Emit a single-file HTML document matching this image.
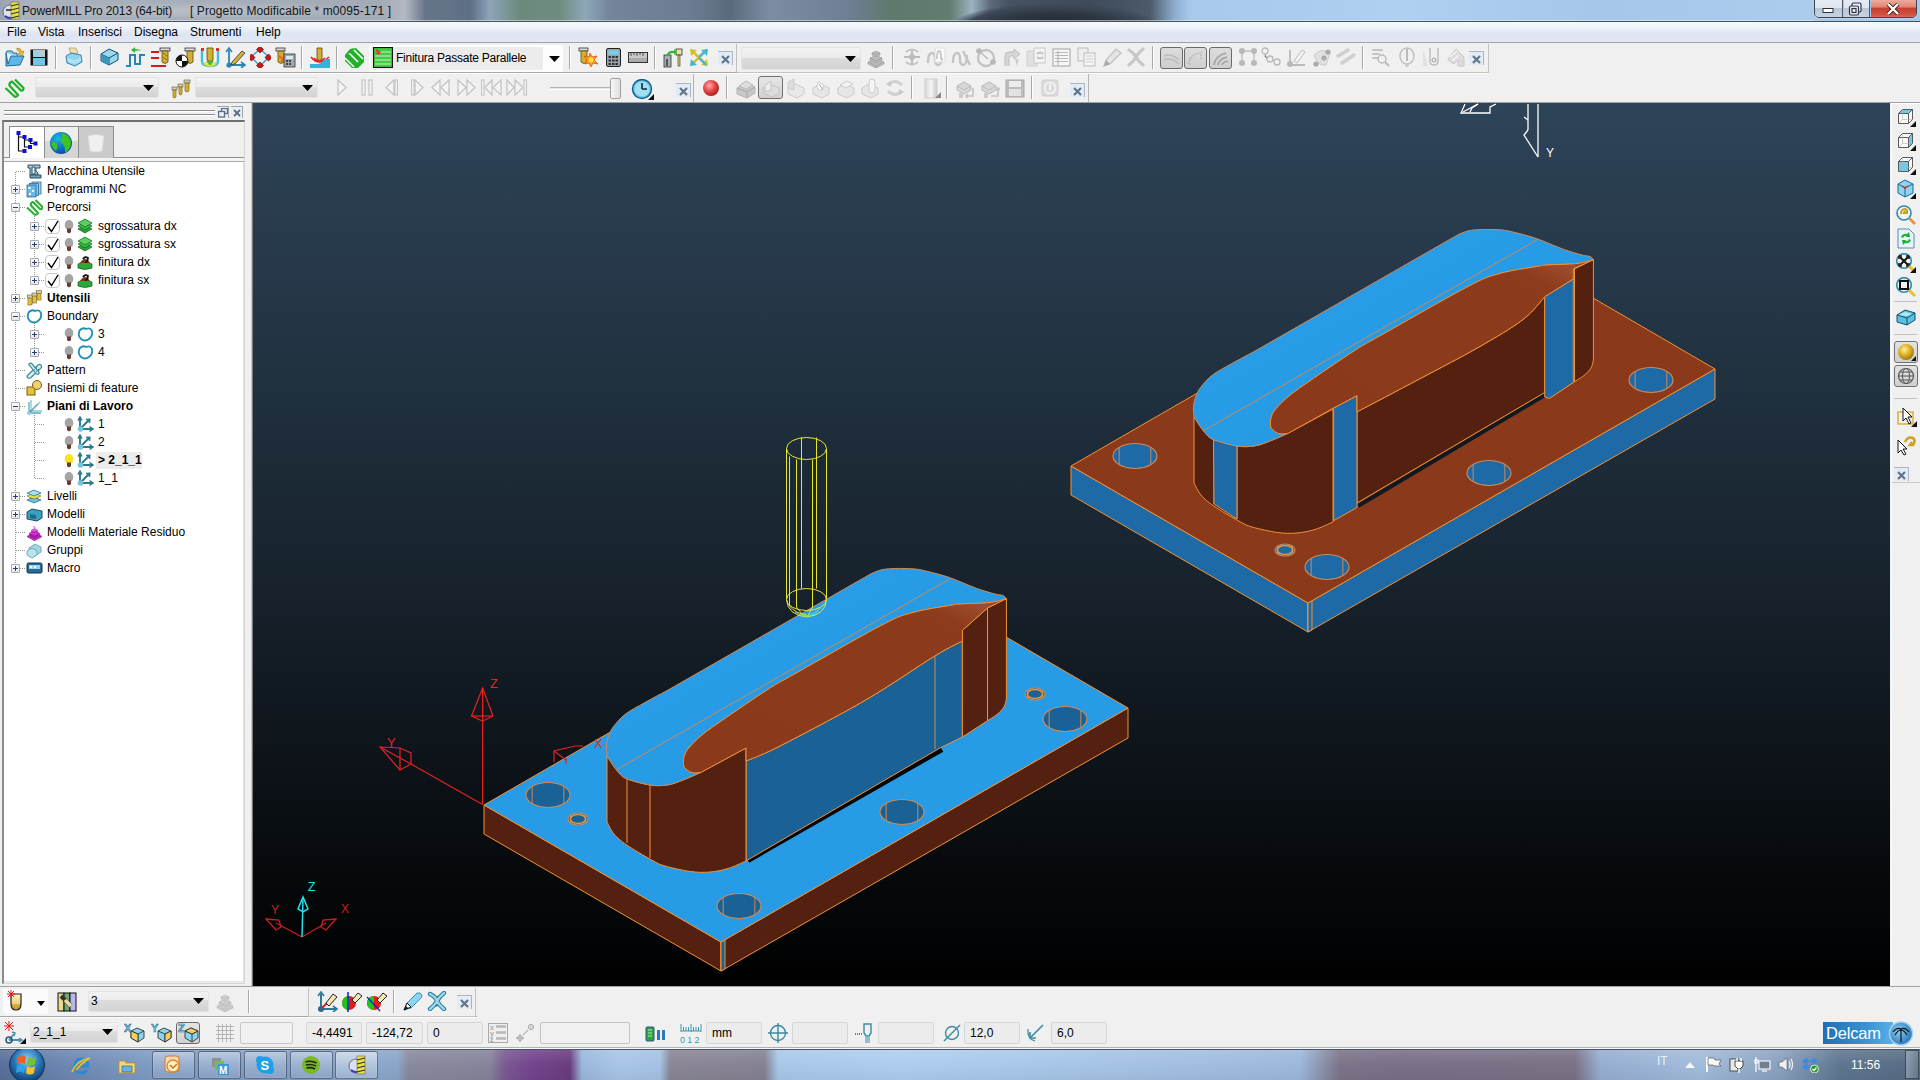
<!DOCTYPE html>
<html><head><meta charset="utf-8">
<style>
*{box-sizing:border-box;margin:0;padding:0}
html,body{width:1920px;height:1080px;overflow:hidden;background:#f0f0f0;font-family:"Liberation Sans",sans-serif;font-size:12px;color:#000}
.a{position:absolute}
#title{left:0;top:0;width:1920px;height:21px;background:linear-gradient(90deg,#7d8796 0%,#8a95a6 20%,#7f8ca0 35%,#6d7a8c 40%,#5a6878 48%,#4f5f70 55%,#44525f 58%,#7e98b4 62%,#a9c8e8 66%,#b2d2f2 75%,#a8c8ea 85%,#b0cff0 95%,#a8c6e6 100%)}
#title .t{left:22px;top:3px;font-size:12px;color:#111;white-space:pre}
#menu{left:0;top:22px;width:1920px;height:20px;background:linear-gradient(#f6f8fc 0,#eef2f9 30%,#dde5f2 60%,#e2e8f4 100%)}
#menu span{position:absolute;top:2px;line-height:16px}
#tb1{left:0;top:42px;width:1920px;height:31px;background:#f0f0f0;border-top:1px solid #a0a0a0}
#tb2{left:0;top:73px;width:1920px;height:30px;background:#f0f0f0;border-top:1px solid #c8c8c8}
#panel{left:0;top:103px;width:253px;height:883px;background:#f0f0f0}
#vp{left:253px;top:103px;width:1637px;height:883px;background:linear-gradient(#2e4459,#17222c 55%,#000 100%);overflow:hidden}
#rtb{left:1890px;top:103px;width:30px;height:883px;background:#f0f0f0}
#btb1{left:0;top:986px;width:1920px;height:31px;background:#f0f0f0;border-top:1px solid #a8a8a8}
#btb2{left:0;top:1017px;width:1920px;height:31px;background:#f0f0f0;border-top:1px solid #d0d0d0}
#task{left:0;top:1048px;width:1920px;height:32px;background:linear-gradient(90deg,#5d7494 0%,#7d93b3 10%,#8aa0bd 20%,#7a90b0 25%,#6a5480 27%,#5d4a78 29%,#8aa6c8 33%,#a5c2e2 45%,#a9c6e5 60%,#9db9db 68%,#776f82 72%,#7b7486 80%,#8faccd 84%,#a5c3e3 90%,#6f8aa8 98%,#5f7690 100%);border-top:1px solid #3c4a5a}
</style></head><body>
<div class="a" style="left:0;top:0;width:1920px;height:21px;background:linear-gradient(90deg,#9aa3b0 0.00%,#a9b1bc 1.04%,#a6aeb9 10.42%,#a2aab6 19.79%,#b4b9c4 21.09%,#66768a 22.14%,#5e6e84 24.48%,#8ea4b8 25.52%,#6c8a7c 27.08%,#6f8c80 29.17%,#8ea8b8 30.47%,#74849a 31.77%,#6c7c92 35.94%,#5a6a7e 38.02%,#7c8ca2 40.10%,#6e7e94 44.27%,#5e7a6c 46.35%,#627c70 49.48%,#9cb2c2 50.62%,#5c6b7c 51.56%,#46525f 52.60%,#3e4a58 56.77%,#4c5a6a 59.90%,#8eaed0 61.20%,#a8c8ec 61.98%,#b0d0f2 72.92%,#a6c6ea 83.33%,#acccee 93.75%,#a8c8ea 100.00%)"></div>
<div class="a" style="left:930px;top:0;width:240px;height:21px;overflow:hidden"><div style="position:absolute;left:20px;top:3px;width:210px;height:50px;border-radius:50%;background:radial-gradient(ellipse at 50% 50%,#1e2630 0%,#2c3540 40%,#3c4756 60%,rgba(70,82,98,0) 72%)"></div></div>
<div class="a" style="left:14px;top:2px;width:390px;height:17px;background:radial-gradient(ellipse at 50% 50%,rgba(200,206,214,0.6),rgba(200,206,214,0) 70%)"></div>
<div class="a" style="left:0;top:21px;width:1920px;height:1px;background:#4a5058"></div>
<div class="a" style="left:0;top:20px;width:1814px;height:1px;background:rgba(235,242,250,0.55)"></div>
<div class="a" style="left:22px;top:3px;line-height:17px;font-size:12px;color:#151515;white-space:pre;letter-spacing:-0.13px">PowerMILL Pro 2013 (64-bit)</div>
<div class="a" style="left:190px;top:3px;line-height:17px;font-size:12px;color:#151515;white-space:pre;letter-spacing:0.1px">[ Progetto Modificabile * m0095-171 ]</div>
<svg class="a" style="left:2px;top:1px" width="18" height="19" viewBox="0 0 18 19"><circle cx="8" cy="11" r="7" fill="#dde2ea" stroke="#556" stroke-width="0.8"/><path d="M3,15 Q8,19 13,15" stroke="#3040c0" stroke-width="2" fill="none"/><rect x="9" y="1" width="8" height="17" fill="#e8e040" stroke="#666" stroke-width="0.6"/><path d="M9,5 L17,3 M9,9 L17,7 M9,13 L17,11 M9,17 L17,15" stroke="#333" stroke-width="1.2"/><path d="M4,9 L9,9" stroke="#222" stroke-width="1.5"/></svg>
<div class="a" style="left:1814px;top:-2px;width:103px;height:20px;border:1px solid #3c4450;border-radius:0 0 5px 5px;overflow:hidden;box-shadow:0 0 1px #fff"><div style="position:absolute;left:0;top:0;width:28px;height:19px;background:linear-gradient(#e6ecf4 0,#dfe6ef 45%,#b9c7d8 50%,#c8d4e2 100%);border-right:1px solid #50586a"></div><div style="position:absolute;left:29px;top:0;width:26px;height:19px;background:linear-gradient(#e6ecf4 0,#dfe6ef 45%,#b9c7d8 50%,#c8d4e2 100%);border-right:1px solid #50586a"></div><div style="position:absolute;left:56px;top:0;width:47px;height:19px;background:linear-gradient(#f0b0a0 0,#e08878 40%,#c84030 50%,#d05040 80%,#e07060 100%)"></div></div>
<svg class="a" style="left:1822px;top:6px" width="14" height="9" viewBox="0 0 14 9"><rect x="1" y="2.5" width="10" height="4" fill="#fff" stroke="#2c3440" stroke-width="1"/></svg>
<svg class="a" style="left:1848px;top:2px" width="14" height="14" viewBox="0 0 14 14"><rect x="4" y="1" width="9" height="9" rx="1.5" fill="#eef" stroke="#2c3440" stroke-width="1.2"/><rect x="1.5" y="4" width="9" height="9" rx="1.5" fill="#eef" stroke="#2c3440" stroke-width="1.2"/><rect x="4" y="6.5" width="4" height="4" fill="none" stroke="#2c3440" stroke-width="1.2"/></svg>
<svg class="a" style="left:1886px;top:3px" width="14" height="12" viewBox="0 0 14 12"><path d="M2,1 L12,11 M12,1 L2,11" stroke="#3a2020" stroke-width="4"/><path d="M2,1 L12,11 M12,1 L2,11" stroke="#fff" stroke-width="2.4"/></svg>
<div class="a" style="left:0;top:1049px;width:1920px;height:31px;background:linear-gradient(90deg,#58709a 0.00%,#6a86b0 3.12%,#7f9cc4 7.81%,#86a2c8 15.62%,#8aa8cc 19.79%,#8aa6c8 20.73%,#8a8a9e 21.25%,#86849a 25.52%,#7a5a94 26.30%,#74468e 27.60%,#6a3c80 29.69%,#9ab8dc 30.31%,#a8c6e8 32.29%,#a4c2e4 34.38%,#8a8696 34.90%,#868294 39.84%,#a8c8ea 40.52%,#aecef0 46.88%,#a6c4e6 57.29%,#9cb8dc 67.71%,#7c7488 69.79%,#7a7088 72.92%,#7a7286 82.03%,#96aed0 83.33%,#a2bcdc 88.54%,#8aa2c0 92.71%,#5f7690 95.83%,#566c84 100.00%)"></div>
<div class="a" style="left:0;top:1049px;width:1920px;height:31px;background:linear-gradient(rgba(255,255,255,0.12),rgba(255,255,255,0) 50%,rgba(0,0,0,0.05))"></div>
<div class="a" style="left:0;top:1049px;width:1920px;height:1px;background:#46546a"></div>
<svg class="a" style="left:7px;top:1044px" width="40" height="36" viewBox="0 0 40 36"><defs><radialGradient id="orb" cx="0.5" cy="0.35" r="0.65"><stop offset="0" stop-color="#8fd0f0"/><stop offset="0.55" stop-color="#2a78b8"/><stop offset="1" stop-color="#0c3a70"/></radialGradient></defs><circle cx="20" cy="21" r="17.5" fill="url(#orb)" stroke="#1a3050" stroke-width="1"/><path d="M11,13 Q15,10 19,13 L18,20 Q14,17 10,20Z" fill="#f06020"/><path d="M21,13 Q25,16 29,13 L28,20 Q24,23 20,20Z" fill="#7ac030"/><path d="M10,22 Q14,19 18,22 L17,29 Q13,26 9,29Z" fill="#30a0e8"/><path d="M20,22 Q24,25 28,22 L27,29 Q23,32 19,29Z" fill="#f8c020"/></svg>
<svg class="a" style="left:71px;top:1056px" width="20" height="19" viewBox="0 0 20 19"><path d="M4,10 H17 Q17,3 10.5,3 Q4,3 4,10 Q4,17 10.5,17 Q14,17 16,14" stroke="#2a8ad8" stroke-width="3" fill="none"/><path d="M1,16 Q6,4 19,2 Q12,6 5,14" stroke="#f0c020" stroke-width="1.6" fill="none"/></svg>
<svg class="a" style="left:118px;top:1058px" width="18" height="16" viewBox="0 0 18 16"><path d="M1,3 H7 L8,5 H17 V15 H1Z" fill="#f4d870" stroke="#b89030" stroke-width="0.8"/><rect x="4" y="8" width="10" height="6" fill="#6ab0e0" stroke="#2a6aa0" stroke-width="0.7"/></svg>
<div class="a" style="left:152px;top:1051px;width:43px;height:28px;border:1px solid rgba(30,40,60,0.55);border-radius:3px;background:linear-gradient(rgba(255,255,255,0.38),rgba(255,255,255,0.18) 50%,rgba(255,255,255,0.08));box-shadow:inset 0 0 1px #fff"></div>
<div class="a" style="left:198px;top:1051px;width:43px;height:28px;border:1px solid rgba(30,40,60,0.55);border-radius:3px;background:linear-gradient(rgba(255,255,255,0.38),rgba(255,255,255,0.18) 50%,rgba(255,255,255,0.08));box-shadow:inset 0 0 1px #fff"></div>
<div class="a" style="left:244px;top:1051px;width:43px;height:28px;border:1px solid rgba(30,40,60,0.55);border-radius:3px;background:linear-gradient(rgba(255,255,255,0.38),rgba(255,255,255,0.18) 50%,rgba(255,255,255,0.08));box-shadow:inset 0 0 1px #fff"></div>
<div class="a" style="left:290px;top:1051px;width:43px;height:28px;border:1px solid rgba(30,40,60,0.55);border-radius:3px;background:linear-gradient(rgba(255,255,255,0.38),rgba(255,255,255,0.18) 50%,rgba(255,255,255,0.08));box-shadow:inset 0 0 1px #fff"></div>
<div class="a" style="left:335px;top:1051px;width:43px;height:28px;border:1px solid rgba(30,40,60,0.55);border-radius:3px;background:linear-gradient(rgba(255,255,255,0.55),rgba(255,255,255,0.35) 50%,rgba(255,255,255,0.2));box-shadow:inset 0 0 1px #fff"></div>
<svg class="a" style="left:163px;top:1055px" width="20" height="20" viewBox="0 0 20 20"><rect x="2" y="1" width="14" height="16" rx="3" fill="#f8d8b0" stroke="#d07830" stroke-width="1"/><circle cx="10" cy="11" r="6" fill="#fff0c0" stroke="#e08830" stroke-width="1.4"/><path d="M7,10 L10,13 L14,9" stroke="#d07020" stroke-width="1.5" fill="none"/></svg>
<svg class="a" style="left:210px;top:1056px" width="20" height="20" viewBox="0 0 20 20"><rect x="2" y="2" width="9" height="9" fill="#909090"/><rect x="5" y="5" width="9" height="9" fill="#78b858"/><rect x="8" y="8" width="11" height="11" fill="#3a9ad8"/><text x="9" y="18" font-size="10" font-weight="bold" fill="#fff" font-family="Liberation Sans">M</text></svg>
<svg class="a" style="left:255px;top:1055px" width="20" height="20" viewBox="0 0 20 20"><circle cx="10" cy="10" r="8.5" fill="#1ea0e8"/><circle cx="5" cy="5" r="4" fill="#1ea0e8"/><circle cx="15" cy="15" r="4" fill="#1ea0e8"/><text x="5.5" y="15" font-size="13" font-weight="bold" fill="#fff" font-family="Liberation Sans">S</text></svg>
<svg class="a" style="left:301px;top:1055px" width="20" height="20" viewBox="0 0 20 20"><circle cx="10" cy="10" r="9" fill="#7ab828"/><path d="M4.5,7 Q10,5 15.5,8 M5,10 Q10,8.5 15,11 M5.5,13 Q10,12 14,14" stroke="#1a2a0a" stroke-width="1.6" fill="none"/></svg>
<svg class="a" style="left:348px;top:1054px" width="20" height="22" viewBox="0 0 20 22"><circle cx="8" cy="12" r="7" fill="#dde2ea" stroke="#556" stroke-width="0.8"/><path d="M3,16 Q8,20 13,16" stroke="#3040c0" stroke-width="2" fill="none"/><rect x="9" y="2" width="8" height="18" fill="#e8e040" stroke="#666" stroke-width="0.6"/><path d="M9,6 L17,4 M9,10 L17,8 M9,14 L17,12 M9,18 L17,16" stroke="#333" stroke-width="1.2"/></svg>
<div class="a" style="left:1657px;top:1054px;line-height:14px;font-size:12px;color:#e8eef6">IT</div>
<svg class="a" style="left:1685px;top:1062px" width="10" height="6" viewBox="0 0 10 6"><path d="M0,6 L5,0 L10,6Z" fill="#f4f6fa"/></svg>
<svg class="a" style="left:1705px;top:1056px" width="17" height="17" viewBox="0 0 17 17"><path d="M2,1 V16" stroke="#fff" stroke-width="1.8"/><path d="M3,2 H9 L10,4 H16 L14,8 L16,10 H9 L8,9 H3Z" fill="#f8f8f8" stroke="#444" stroke-width="0.6"/></svg>
<svg class="a" style="left:1729px;top:1056px" width="16" height="17" viewBox="0 0 16 17"><rect x="1" y="3" width="8" height="12" fill="#e8e8e8" stroke="#333" stroke-width="0.8"/><path d="M6,5 H14 V10 L11,13 H9 L6,10Z" fill="#fff" stroke="#333" stroke-width="0.9"/><path d="M8,2 V5 M12,2 V5 M10,13 V17" stroke="#fff" stroke-width="1.4"/></svg>
<svg class="a" style="left:1754px;top:1056px" width="17" height="17" viewBox="0 0 17 17"><path d="M2,1 V16 M1,4 H4 V7 H1Z" stroke="#fff" stroke-width="1.2" fill="none"/><rect x="5" y="5" width="11" height="8" fill="#70808e" stroke="#f4f4f4" stroke-width="1.2"/><path d="M8,15 H13" stroke="#fff" stroke-width="1.2"/></svg>
<svg class="a" style="left:1778px;top:1056px" width="15" height="17" viewBox="0 0 15 17"><path d="M1,6 H4 L9,2 V15 L4,11 H1Z" fill="#f0f0f0" stroke="#555" stroke-width="0.6"/><path d="M11,5 Q13,8.5 11,12 M13,3 Q16,8.5 13,14" stroke="#f4f4f4" stroke-width="1.2" fill="none"/></svg>
<svg class="a" style="left:1802px;top:1056px" width="17" height="17" viewBox="0 0 17 17"><path d="M4,2 L8,5 L4,8 L0,5Z M12,2 L16,5 L12,8 L8,5Z M4,8 L8,11 L4,14 L0,11Z M12,8 L16,11 L12,14 L8,11Z" fill="#3a8ae0"/><circle cx="12.5" cy="13" r="4" fill="#2a9a2a" stroke="#fff" stroke-width="0.8"/><path d="M10.5,13 L12,14.5 L14.5,11.5" stroke="#fff" stroke-width="1.2" fill="none"/></svg>
<div class="a" style="left:1851px;top:1058px;line-height:14px;font-size:12px;color:#fff">11:56</div>
<div class="a" style="left:1905px;top:1050px;width:14px;height:29px;border:1px solid rgba(40,50,60,0.7);background:linear-gradient(90deg,rgba(255,255,255,0.3),rgba(255,255,255,0.1))"></div>
<div id="menu" class="a"><span style="left:7px">File</span><span style="left:38px">Vista</span><span style="left:78px">Inserisci</span><span style="left:134px">Disegna</span><span style="left:190px">Strumenti</span><span style="left:256px">Help</span></div>
<div class="a" style="left:0;top:42px;width:1920px;height:1px;background:#9ca3ad"></div>
<div class="a" style="left:0;top:43px;width:1920px;height:29px;background:#f0f0f0"></div>
<div class="a" style="left:0;top:72px;width:1489px;height:1px;background:#a9a9a9"></div>
<div class="a" style="left:0;top:73px;width:1489px;height:1px;background:#fdfdfd"></div>
<div class="a" style="left:0;top:102px;width:1920px;height:1px;background:#a0a0a0"></div>
<div class="a" style="left:737px;top:44px;width:752px;height:29px;border-right:1px solid #c4c4c4;border-bottom:1px solid #c4c4c4"></div>
<div class="a" style="left:736px;top:44px;width:1px;height:28px;background:#c0c0c0"></div>
<svg class="a" style="left:5px;top:47px" width="20" height="20" viewBox="0 0 20 20"><path d="M1,6 L1,19 L15,18 L19,9 L6,9 L3,17 Z" fill="#5bb8e8" stroke="#1b5d8c" stroke-width="0.9"/><path d="M1,6 L2,4 L7,4 L8,6 L12,6 L12,9" fill="#8ed0f0" stroke="#1b5d8c" stroke-width="0.9"/><path d="M12,1 Q16,1 17,5 L19,4 L17,9 L13,7 L15,6 Q14,3 12,3Z" fill="#f0c030" stroke="#a07010" stroke-width="0.6"/></svg>
<svg class="a" style="left:30px;top:49px" width="18" height="17" viewBox="0 0 18 17"><rect x="0.5" y="0.5" width="17" height="16" fill="#111"/><rect x="3" y="1" width="12" height="7" fill="url(#sv1)"/><rect x="3" y="9" width="12" height="7" fill="#6cc6ea"/><defs><linearGradient id="sv1" x1="0" x2="1"><stop offset="0" stop-color="#8ad4f0"/><stop offset="1" stop-color="#c8c8c8"/></linearGradient></defs></svg>
<div class="a" style="left:55px;top:46px;width:1px;height:23px;background:#a8a8a8;box-shadow:1px 0 0 #fff"></div>
<svg class="a" style="left:65px;top:47px" width="18" height="20" viewBox="0 0 18 20"><path d="M4,1 L11,1 L13,6 L6,7Z" fill="#eedfa8" stroke="#a8986a" stroke-width="0.7"/><path d="M1,9 L6,6 L16,8 L17,15 L10,19 L2,16Z" fill="#8fd2ee" stroke="#2a7aa8" stroke-width="0.9"/><path d="M2,12 L10,14 L16,11 M3,14 L10,16 L16,13" stroke="#d8f2fc" stroke-width="0.9" fill="none"/></svg>
<div class="a" style="left:90px;top:46px;width:1px;height:23px;background:#a8a8a8;box-shadow:1px 0 0 #fff"></div>
<svg class="a" style="left:100px;top:48px" width="19" height="18" viewBox="0 0 19 18"><path d="M1,6 L9,1 L18,5 L18,12 L9,17 L1,13Z" fill="#9ad6ee" stroke="#13506e" stroke-width="1"/><path d="M1,6 L9,10 L18,5 M9,10 V17" stroke="#13506e" stroke-width="1" fill="none"/><path d="M1,6 L9,10 L9,17 L1,13Z" fill="#3d96bc"/></svg>
<svg class="a" style="left:125px;top:47px" width="21" height="20" viewBox="0 0 21 20"><path d="M1,19 H5 V8 H10 V17 H15 V8 H20" fill="none" stroke="#2a86b0" stroke-width="2"/><path d="M6,3 L10,0 L10,2 L17,3 L10,4 L10,6Z" fill="#34b83a"/></svg>
<svg class="a" style="left:150px;top:47px" width="21" height="21" viewBox="0 0 21 21"><g stroke="#d81818" stroke-width="2"><line x1="1" y1="5" x2="9" y2="5"/><line x1="1" y1="11" x2="9" y2="11"/><line x1="1" y1="19" x2="16" y2="19"/></g><rect x="10" y="1" width="10" height="3" fill="#ddd" stroke="#333" stroke-width="0.8"/><path d="M12,4 H18 V15 Q15,18 12,15Z" fill="#d4b030" stroke="#5a4a10" stroke-width="0.8"/><path d="M13,6 L17,9 M13,10 L17,13" stroke="#8a6a10"/></svg>
<svg class="a" style="left:175px;top:47px" width="21" height="21" viewBox="0 0 21 21"><rect x="10" y="1" width="10" height="3" fill="#ddd" stroke="#333" stroke-width="0.8"/><path d="M12,4 H18 V15 Q15,18 12,15Z" fill="#d4b030" stroke="#5a4a10" stroke-width="0.8"/><circle cx="7" cy="14" r="6" fill="#fff" stroke="#111" stroke-width="1"/><path d="M7,8 A6,6 0 0 0 1,14 H7Z M7,14 V20 A6,6 0 0 0 13,14Z" fill="#111"/></svg>
<svg class="a" style="left:200px;top:47px" width="21" height="21" viewBox="0 0 21 21"><path d="M2,2 V14 Q2,19 10,19 Q18,19 18,14 V2" fill="none" stroke="#40c0e0" stroke-width="2.4"/><path d="M4,16 Q10,21 16,16" stroke="#e0e030" stroke-width="2.4" fill="none"/><path d="M7,14 L10,17 L13,14" stroke="#30c040" stroke-width="2.2" fill="none"/><rect x="1" y="1" width="3" height="3" fill="#e03030"/><rect x="16" y="1" width="3" height="3" fill="#e03030"/><path d="M7,1 H13 V13 Q10,16 7,13Z" fill="#d4b030" stroke="#5a4a10" stroke-width="0.8"/></svg>
<svg class="a" style="left:225px;top:47px" width="21" height="21" viewBox="0 0 21 21"><path d="M4,19 V3 M4,18 H19" stroke="#2a86b0" stroke-width="1.8" fill="none"/><path d="M1,5 L4,1 L7,5 M16,15 L20,18 L16,21" stroke="#2a86b0" stroke-width="1.6" fill="none"/><circle cx="4" cy="18" r="2.6" fill="#2a86b0"/><path d="M7,15 L17,4 L20,6 L10,17 L6,18Z" fill="#d0b040" stroke="#333" stroke-width="0.8"/></svg>
<svg class="a" style="left:250px;top:47px" width="21" height="21" viewBox="0 0 21 21"><path d="M10,2 L19,10 L10,19 L1,10Z" fill="none" stroke="#48a0c8" stroke-width="1.5"/><g fill="#c81818" stroke="#600" stroke-width="0.6"><rect x="7.5" y="0" width="5" height="5" transform="rotate(45 10 2.5)"/><rect x="16" y="8" width="5" height="5" transform="rotate(45 18.5 10.5)"/><rect x="7.5" y="16" width="5" height="5" transform="rotate(45 10 18.5)"/><rect x="-1" y="8" width="5" height="5" transform="rotate(45 1.5 10.5)"/></g></svg>
<svg class="a" style="left:275px;top:47px" width="21" height="21" viewBox="0 0 21 21"><rect x="1" y="1" width="9" height="3" fill="#ddd" stroke="#333" stroke-width="0.8"/><path d="M3,4 H9 V15 Q6,18 3,15Z" fill="#d4b030" stroke="#5a4a10" stroke-width="0.8"/><path d="M4,9 L8,12 L6,15" stroke="#f06020" stroke-width="2" fill="none"/><rect x="9" y="7" width="11" height="13" fill="#a0a8b0" stroke="#333" stroke-width="0.8"/><rect x="11" y="9" width="7" height="3" fill="#d8e8f0"/><g fill="#444"><rect x="11" y="13" width="2" height="2"/><rect x="14" y="13" width="2" height="2"/><rect x="11" y="16" width="2" height="2"/><rect x="14" y="16" width="2" height="2"/></g></svg>
<div class="a" style="left:301px;top:46px;width:1px;height:23px;background:#a8a8a8;box-shadow:1px 0 0 #fff"></div>
<svg class="a" style="left:309px;top:47px" width="22" height="21" viewBox="0 0 22 21"><path d="M8,1 H13 V12 Q10.5,15 8,12Z" fill="#d4b030" stroke="#5a4a10" stroke-width="0.8"/><path d="M2,10 Q10,20 20,10" stroke="#e02020" stroke-width="1.6" fill="none"/><path d="M5,11 Q10,17 16,11" stroke="#e02020" stroke-width="1.4" fill="none"/><path d="M1,17 H8 Q12,17 16,12 H21 V21 H1Z" fill="#38b0dc"/></svg>
<div class="a" style="left:336px;top:46px;width:1px;height:23px;background:#a8a8a8;box-shadow:1px 0 0 #fff"></div>
<svg class="a" style="left:344px;top:47px" width="21" height="21" viewBox="0 0 21 21"><path d="M6,2 L12,1 L20,9 L20,15 L14,21 L8,21 L1,14 L1,8Z" fill="#22b02a"/><path d="M1,11 L10,20 M5,6 L14,15 M10,3 L19,12" stroke="#f0fff0" stroke-width="1.7"/><path d="M5,6 L9,2" stroke="#22b02a" stroke-width="2"/></svg>
<div class="a" style="left:369px;top:45px;width:194px;height:27px;background:#fdfdfd;border-radius:2px"></div>
<div class="a" style="left:371px;top:47px;width:172px;height:23px;background:#ececec"></div>
<svg class="a" style="left:373px;top:47px" width="20" height="21" viewBox="0 0 20 21"><rect x="0.5" y="0.5" width="19" height="20" fill="#44cc44" stroke="#111" stroke-width="1.2"/><g stroke="#c8f0c8" stroke-width="1"><line x1="2" y1="5" x2="18" y2="5"/><line x1="2" y1="9" x2="18" y2="9"/><line x1="2" y1="13" x2="18" y2="13"/><line x1="2" y1="17" x2="18" y2="17"/></g><path d="M4,2 L6,8 M2,5 L8,5 M3,3 L7,7 M7,3 L3,7" stroke="#e03020" stroke-width="1"/></svg>
<div class="a" style="left:396px;top:50px;line-height:16px;white-space:nowrap;font-size:12px;letter-spacing:-0.25px">Finitura Passate Parallele</div>
<svg class="a" style="left:549px;top:56px" width="11" height="6" viewBox="0 0 11 6"><path d="M0,0H11L5.5,6Z" fill="#000"/></svg>
<div class="a" style="left:569px;top:46px;width:1px;height:23px;background:#a8a8a8;box-shadow:1px 0 0 #fff"></div>
<svg class="a" style="left:578px;top:47px" width="21" height="21" viewBox="0 0 21 21"><rect x="1" y="1" width="9" height="3" fill="#ddd" stroke="#333" stroke-width="0.8"/><path d="M3,4 H9 V15 Q6,18 3,15Z" fill="#d4b030" stroke="#5a4a10" stroke-width="0.8"/><path d="M12,6 L14,10 L19,9 L16,13 L20,17 L15,16 L13,20 L11,16 L7,17 L9,13 L6,9 L11,10Z" fill="#f8a020" stroke="#e05010" stroke-width="0.8"/><circle cx="13" cy="13" r="2.5" fill="#ffe040"/></svg>
<svg class="a" style="left:606px;top:48px" width="15" height="19" viewBox="0 0 15 19"><rect x="0.5" y="0.5" width="14" height="18" rx="1.5" fill="#9aa4ac" stroke="#222" stroke-width="1"/><rect x="2.5" y="2.5" width="10" height="4" fill="#7ad0f0"/><g fill="#333"><rect x="2.5" y="8" width="2.5" height="2"/><rect x="6" y="8" width="2.5" height="2"/><rect x="9.5" y="8" width="2.5" height="2"/><rect x="2.5" y="11.5" width="2.5" height="2"/><rect x="6" y="11.5" width="2.5" height="2"/><rect x="9.5" y="11.5" width="2.5" height="2"/><rect x="2.5" y="15" width="2.5" height="2"/><rect x="6" y="15" width="2.5" height="2"/><rect x="9.5" y="15" width="2.5" height="2"/></g></svg>
<svg class="a" style="left:628px;top:52px" width="20" height="11" viewBox="0 0 20 11"><rect x="0.5" y="0.5" width="19" height="10" fill="#c8c8c8" stroke="#333" stroke-width="1"/><path d="M3,1V4M6,1V3M9,1V4M12,1V3M15,1V4" stroke="#333" stroke-width="0.8"/><rect x="1" y="6" width="18" height="4" fill="#aaa"/></svg>
<div class="a" style="left:654px;top:46px;width:1px;height:23px;background:#a8a8a8;box-shadow:1px 0 0 #fff"></div>
<svg class="a" style="left:663px;top:47px" width="21" height="21" viewBox="0 0 21 21"><rect x="1" y="8" width="7" height="12" fill="#a8aeb2" stroke="#333" stroke-width="0.8"/><rect x="3" y="12" width="2" height="7" fill="#555"/><rect x="13" y="2" width="6" height="6" fill="#f0e0a0" stroke="#333" stroke-width="0.8"/><rect x="15" y="8" width="2" height="11" fill="#e0c860" stroke="#333" stroke-width="0.6"/><path d="M3,9 Q5,3 11,4 L11,2 L14,5 L11,8 L11,6 Q6,6 5,9Z" fill="#30b840"/></svg>
<svg class="a" style="left:689px;top:48px" width="20" height="19" viewBox="0 0 20 19"><path d="M2,2 L18,17 M18,2 L2,17" stroke="#d0c030" stroke-width="2.4"/><path d="M1,1 L8,2 L2,8Z M19,18 L12,17 L18,11Z" fill="#d0c030"/><path d="M19,1 L12,2 L18,8Z M1,18 L8,17 L2,11Z" fill="#40b8d8"/><path d="M10,10 L17,17 M10,9 L17,2" stroke="#40b8d8" stroke-width="2"/></svg>
<div class="a" style="left:718px;top:51px;width:15px;height:14px;background:#e3ebf5;border-top:1px solid #a7b7c9;border-right:1px solid #a7b7c9"></div>
<svg class="a" style="left:721px;top:55px" width="9" height="9" viewBox="0 0 9 9"><path d="M1,1L8,8M8,1L1,8" stroke="#637386" stroke-width="2.2"/></svg>
<div class="a" style="left:741px;top:47px;width:120px;height:23px;background:linear-gradient(#f3f3f3 0,#ebebeb 45%,#dcdcdc 50%,#d3d3d3 100%);border-radius:2px;border:1px solid #e4e4e4"></div>
<svg class="a" style="left:845px;top:56px" width="11" height="6"><path d="M0,0H11L5.5,6Z" fill="#000"/></svg>
<svg class="a" style="left:866px;top:48px" width="20" height="20"><g fill="#bdbdbd" stroke="#999" stroke-width="0.6"><path d="M2,14 L10,10 L18,14 L10,18Z"/><path d="M2,14 V16 L10,20 V18Z M18,14 V16 L10,20 V18Z"/><path d="M4,10 L10,7 L16,10 L10,13Z"/><path d="M4,10 V12 L10,15 L16,12 V10 L10,13Z"/><path d="M6,5 L10,3 L14,5 L10,7Z"/><path d="M6,5 V7 L10,9 L14,7 V5 L10,7Z"/></g></svg>
<div class="a" style="left:892px;top:46px;width:1px;height:23px;background:#a8a8a8;box-shadow:1px 0 0 #fff"></div>
<svg class="a" style="left:902px;top:47px" width="20" height="21" viewBox="0 0 20 21"><path d="M10,2 V18 M2,10 H18" stroke="#bbb" stroke-width="2"/><path d="M4,5 Q10,0 16,5 M16,15 Q10,20 4,15" stroke="#c4c4c4" stroke-width="2" fill="none"/><circle cx="10" cy="10" r="3" fill="#bbb"/></svg>
<svg class="a" style="left:926px;top:47px" width="20" height="21" viewBox="0 0 20 21"><path d="M2,16 Q2,6 6,6 Q9,6 9,12 Q9,18 12,18 Q16,18 16,8" stroke="#c4c4c4" stroke-width="2.4" fill="none"/><rect x="9" y="1" width="10" height="14" fill="#fafafa" stroke="#ddd"/><path d="M11,12 Q11,4 13,4 Q15,4 15,10 Q15,14 17,12" stroke="#c4c4c4" stroke-width="1.8" fill="none"/></svg>
<svg class="a" style="left:951px;top:47px" width="20" height="21" viewBox="0 0 20 21"><path d="M2,16 Q2,6 6,6 Q9,6 9,12 Q9,18 12,18 Q16,18 16,8 M12,4 L19,18" stroke="#c4c4c4" stroke-width="2.4" fill="none"/></svg>
<svg class="a" style="left:976px;top:47px" width="20" height="21" viewBox="0 0 20 21"><circle cx="10" cy="11" r="8" stroke="#c4c4c4" stroke-width="2.4" fill="none"/><circle cx="3" cy="4" r="2.8" fill="#b8b8b8"/><circle cx="17" cy="15" r="2.8" fill="#b8b8b8"/><path d="M4,5 L12,12" stroke="#bbb" stroke-width="1.5"/></svg>
<svg class="a" style="left:1001px;top:47px" width="20" height="21" viewBox="0 0 20 21"><path d="M4,19 V9 Q4,5 8,5 H13 L13,2 L19,7 L13,12 L13,9 H9 Q8,9 8,11 V19" fill="#d6d6d6" stroke="#bdbdbd" stroke-width="1"/><path d="M14,12 L18,12 L16,19 Z" fill="#ccc"/></svg>
<svg class="a" style="left:1026px;top:47px" width="20" height="21" viewBox="0 0 20 21"><rect x="1" y="4" width="10" height="15" fill="#e0e0e0" stroke="#d0d0d0"/><rect x="8" y="1" width="11" height="15" fill="#f4f4f4" stroke="#c8c8c8"/><path d="M11,7 Q14,4 17,7 M17,10 Q14,13 11,10" stroke="#c0c0c0" stroke-width="1.8" fill="none"/></svg>
<svg class="a" style="left:1052px;top:47px" width="20" height="21" viewBox="0 0 20 21"><rect x="1" y="2" width="17" height="17" fill="#f6f6f6" stroke="#b0b0b0" stroke-width="1.2"/><path d="M3,5.5 H16 M3,8.5 H16 M3,11.5 H16 M3,14.5 H16 M6,4 V18" stroke="#b8b8b8" stroke-width="1.2"/></svg>
<svg class="a" style="left:1077px;top:47px" width="20" height="21" viewBox="0 0 20 21"><rect x="1" y="1" width="10" height="13" fill="#eee" stroke="#bbb"/><rect x="7" y="6" width="11" height="13" fill="#f4f4f4" stroke="#bbb"/><path d="M9,9H16M9,12H16M9,15H16" stroke="#ccc"/></svg>
<svg class="a" style="left:1102px;top:47px" width="20" height="21" viewBox="0 0 20 21"><path d="M2,19 L4,13 L14,2 L19,6 L8,17Z" fill="#e4e4e4" stroke="#c0c0c0" stroke-width="1.2"/><path d="M2,19 L4,13 L8,17Z" fill="#a8a8a8"/></svg>
<svg class="a" style="left:1126px;top:47px" width="20" height="21" viewBox="0 0 20 21"><path d="M3,3 Q8,6 10,10 Q12,6 17,2 M3,18 Q8,14 10,10 Q12,14 17,18" stroke="#c8c8c8" stroke-width="3.2" fill="none" stroke-linecap="round"/></svg>
<div class="a" style="left:1152px;top:46px;width:1px;height:23px;background:#a8a8a8;box-shadow:1px 0 0 #fff"></div>
<div class="a" style="left:1160px;top:47px;width:23px;height:22px;border:1px solid #6a6a6a;border-radius:3px;background:linear-gradient(#dcdcdc,#cfcfcf)"></div>
<div class="a" style="left:1184px;top:47px;width:23px;height:22px;border:1px solid #6a6a6a;border-radius:3px;background:linear-gradient(#dcdcdc,#cfcfcf)"></div>
<div class="a" style="left:1209px;top:47px;width:23px;height:22px;border:1px solid #6a6a6a;border-radius:3px;background:linear-gradient(#dcdcdc,#cfcfcf)"></div>
<svg class="a" style="left:1163px;top:50px" width="17" height="16" viewBox="0 0 17 16"><path d="M1,6 Q8,3 16,10 M1,10 Q8,7 16,14" stroke="#bcbcbc" stroke-width="1.5" fill="none"/></svg>
<svg class="a" style="left:1187px;top:50px" width="17" height="16" viewBox="0 0 17 16"><path d="M1,14 Q3,4 16,2 M3,15 V8 M14,4 V9" stroke="#b8b8b8" stroke-width="1.3" fill="none" stroke-dasharray="2 1"/></svg>
<svg class="a" style="left:1212px;top:50px" width="17" height="16" viewBox="0 0 17 16"><path d="M2,15 Q3,6 14,3 M6,15 Q7,9 15,7 M10,15 Q11,12 16,11" stroke="#a4a4a4" stroke-width="1.7" fill="none"/></svg>
<svg class="a" style="left:1238px;top:47px" width="20" height="21" viewBox="0 0 20 21"><path d="M4,4 H16 M4,4 V16 M16,4 V16" stroke="#c0c0c0" stroke-width="1.5"/><circle cx="4" cy="4" r="3" fill="#b8b8b8"/><circle cx="16" cy="4" r="3" fill="#b8b8b8"/><circle cx="4" cy="16" r="3" fill="#b8b8b8"/><circle cx="16" cy="16" r="3" fill="#b8b8b8"/></svg>
<svg class="a" style="left:1261px;top:47px" width="20" height="21" viewBox="0 0 20 21"><circle cx="4" cy="4" r="3" fill="none" stroke="#b8b8b8" stroke-width="1.3"/><circle cx="9" cy="12" r="3" fill="none" stroke="#b8b8b8" stroke-width="1.3"/><circle cx="16" cy="15" r="3" fill="none" stroke="#b8b8b8" stroke-width="1.3"/><path d="M4,7 V10 L6,12 M12,13 L13,14" stroke="#bbb"/></svg>
<svg class="a" style="left:1286px;top:47px" width="20" height="21" viewBox="0 0 20 21"><path d="M4,18 V3 M4,18 H19" stroke="#bbb" stroke-width="1.8" fill="none"/><circle cx="4" cy="17" r="3" fill="#b8b8b8"/><path d="M8,14 L16,3 L19,5 L11,16Z" fill="#f4f4f4" stroke="#bbb"/></svg>
<svg class="a" style="left:1312px;top:47px" width="20" height="21" viewBox="0 0 20 21"><path d="M2,8 Q10,0 18,6 L14,18 Q6,20 2,8Z" fill="#e0e0e0" stroke="#ccc"/><circle cx="16" cy="5" r="2.6" fill="#aaa"/><circle cx="12" cy="11" r="2.6" fill="#aaa"/><circle cx="4" cy="17" r="2.6" fill="#aaa"/></svg>
<svg class="a" style="left:1336px;top:47px" width="20" height="21" viewBox="0 0 20 21"><path d="M2,9 L12,3 M6,16 L18,8" stroke="#cfcfcf" stroke-width="3.5" stroke-linecap="round"/></svg>
<div class="a" style="left:1362px;top:46px;width:1px;height:23px;background:#a8a8a8;box-shadow:1px 0 0 #fff"></div>
<svg class="a" style="left:1370px;top:47px" width="21" height="21" viewBox="0 0 21 21"><path d="M3,3 H12 M3,7 H9 M3,11 H8" stroke="#c4c4c4" stroke-width="2" stroke-linecap="round"/><circle cx="12" cy="12" r="4" fill="none" stroke="#bbb" stroke-width="1.5"/><path d="M15,15 L19,19" stroke="#bbb" stroke-width="2"/></svg>
<svg class="a" style="left:1399px;top:47px" width="21" height="21" viewBox="0 0 21 21"><ellipse cx="8" cy="9" rx="7" ry="8" fill="none" stroke="#c0c0c0" stroke-width="1.5"/><path d="M8,2 V14" stroke="#bbb" stroke-width="2"/><circle cx="8" cy="18" r="2" fill="#ccc"/></svg>
<svg class="a" style="left:1422px;top:47px" width="21" height="21" viewBox="0 0 21 21"><path d="M1,2 L6,19 H1Z" fill="#e2e2e2"/><path d="M8,1 V14 Q8,18 12,18 Q16,18 16,14 V1" stroke="#b8b8b8" stroke-width="1.3" fill="none"/><circle cx="12" cy="13" r="2" fill="none" stroke="#999"/></svg>
<svg class="a" style="left:1446px;top:47px" width="21" height="21" viewBox="0 0 21 21"><path d="M2,12 L10,2 L18,10 L18,19 L12,19 L12,13 L8,17 L2,13Z" fill="#dcdcdc" stroke="#c8c8c8"/><path d="M4,10 L11,4 M6,14 L13,8" stroke="#f4f4f4" stroke-width="1.5"/></svg>
<div class="a" style="left:1469px;top:51px;width:15px;height:14px;background:#e3ebf5;border-top:1px solid #a7b7c9;border-right:1px solid #a7b7c9"></div>
<svg class="a" style="left:1472px;top:55px" width="9" height="9" viewBox="0 0 9 9"><path d="M1,1L8,8M8,1L1,8" stroke="#637386" stroke-width="2.2"/></svg>
<svg class="a" style="left:4px;top:78px" width="22" height="21" viewBox="0 0 22 21"><path d="M1.5,10 L10.5,18.5 Q12.5,19.5 14,17 L5.5,7.5 Q5,4.5 8,3.5 L17,12.5 Q19.5,13 19.5,10 L11,1.5" fill="none" stroke="#22b02a" stroke-width="2.3" stroke-linejoin="round" stroke-linecap="butt"/></svg>
<div class="a" style="left:35px;top:77px;width:124px;height:21px;background:linear-gradient(#f3f3f3 0,#ebebeb 45%,#dcdcdc 50%,#d3d3d3 100%);border-radius:2px;border:1px solid #e4e4e4"></div>
<svg class="a" style="left:143px;top:85px" width="11" height="6"><path d="M0,0H11L5.5,6Z" fill="#000"/></svg>
<svg class="a" style="left:171px;top:78px" width="20" height="21" viewBox="0 0 20 21"><g stroke="#6a5a10" stroke-width="0.6"><rect x="1" y="9" width="5" height="3" fill="#ccc"/><path d="M2,12 H5 V19 Q3.5,21 2,19Z" fill="#d8b030"/><rect x="7" y="6" width="5" height="3" fill="#ccc"/><path d="M8,9 H11 V16 Q9.5,18 8,16Z" fill="#d8b030"/><rect x="13" y="2" width="6" height="3" fill="#ccc"/><path d="M14,5 H18 V13 Q16,15 14,13Z" fill="#d8b030"/></g></svg>
<div class="a" style="left:195px;top:77px;width:123px;height:21px;background:linear-gradient(#f3f3f3 0,#ebebeb 45%,#dcdcdc 50%,#d3d3d3 100%);border-radius:2px;border:1px solid #e4e4e4"></div>
<svg class="a" style="left:302px;top:85px" width="11" height="6"><path d="M0,0H11L5.5,6Z" fill="#000"/></svg>
<svg class="a" style="left:337px;top:79px" width="10" height="17" viewBox="0 0 10 17"><path d="M1,1 L9,8.5 L1,16Z" fill="#f4f4f4" stroke="#c4c4c4" stroke-width="1.3"/></svg>
<svg class="a" style="left:361px;top:79px" width="12" height="17" viewBox="0 0 12 17"><rect x="1" y="1" width="3" height="15" fill="#f4f4f4" stroke="#c4c4c4" stroke-width="1.2"/><rect x="8" y="1" width="3" height="15" fill="#f4f4f4" stroke="#c4c4c4" stroke-width="1.2"/></svg>
<svg class="a" style="left:384px;top:79px" width="14" height="17" viewBox="0 0 14 17"><path d="M10,1 L2,8.5 L10,16Z" fill="#f4f4f4" stroke="#c4c4c4" stroke-width="1.3"/><rect x="11" y="1" width="2.5" height="15" fill="#f4f4f4" stroke="#c4c4c4" stroke-width="1.1"/></svg>
<svg class="a" style="left:411px;top:79px" width="14" height="17" viewBox="0 0 14 17"><rect x="0.5" y="1" width="2.5" height="15" fill="#f4f4f4" stroke="#c4c4c4" stroke-width="1.1"/><path d="M4,1 L12,8.5 L4,16Z" fill="#f4f4f4" stroke="#c4c4c4" stroke-width="1.3"/></svg>
<svg class="a" style="left:431px;top:79px" width="19" height="17" viewBox="0 0 19 17"><path d="M9,1 L1,8.5 L9,16Z M18,1 L10,8.5 L18,16Z" fill="#f4f4f4" stroke="#c4c4c4" stroke-width="1.3"/></svg>
<svg class="a" style="left:457px;top:79px" width="19" height="17" viewBox="0 0 19 17"><path d="M1,1 L9,8.5 L1,16Z M10,1 L18,8.5 L10,16Z" fill="#f4f4f4" stroke="#c4c4c4" stroke-width="1.3"/></svg>
<svg class="a" style="left:481px;top:79px" width="21" height="17" viewBox="0 0 21 17"><rect x="0.5" y="1" width="2.5" height="15" fill="#f4f4f4" stroke="#c4c4c4" stroke-width="1.1"/><path d="M11,1 L4,8.5 L11,16Z M20,1 L12,8.5 L20,16Z" fill="#f4f4f4" stroke="#c4c4c4" stroke-width="1.3"/></svg>
<svg class="a" style="left:506px;top:79px" width="21" height="17" viewBox="0 0 21 17"><path d="M1,1 L8,8.5 L1,16Z M9,1 L17,8.5 L9,16Z" fill="#f4f4f4" stroke="#c4c4c4" stroke-width="1.3"/><rect x="18" y="1" width="2.5" height="15" fill="#f4f4f4" stroke="#c4c4c4" stroke-width="1.1"/></svg>
<div class="a" style="left:550px;top:87px;width:62px;height:3px;border-top:1px solid #b0b0b0;border-bottom:1px solid #fff;background:#e4e4e4"></div>
<div class="a" style="left:610px;top:78px;width:11px;height:21px;border:1px solid #a0a0a0;border-radius:2px;background:linear-gradient(90deg,#f8f8f8,#dedede)"></div>
<svg class="a" style="left:631px;top:79px" width="24" height="21" viewBox="0 0 24 21"><circle cx="11" cy="10" r="9.5" fill="#5cc4ec" stroke="#1b5d80" stroke-width="1.4"/><circle cx="11" cy="10" r="7.5" fill="#a4def4"/><path d="M11,10 L11,4 M11,10 L16,10" stroke="#0a2a40" stroke-width="1.6"/><path d="M17,21 L23,21 L23,15Z" fill="#111"/></svg>
<div class="a" style="left:676px;top:83px;width:15px;height:14px;background:#e3ebf5;border-top:1px solid #a7b7c9;border-right:1px solid #a7b7c9"></div>
<svg class="a" style="left:679px;top:87px" width="9" height="9" viewBox="0 0 9 9"><path d="M1,1L8,8M8,1L1,8" stroke="#637386" stroke-width="2.2"/></svg>
<div class="a" style="left:693px;top:74px;width:1px;height:28px;background:#b4b4b4"></div>
<svg class="a" style="left:702px;top:79px" width="18" height="18" viewBox="0 0 18 18"><defs><radialGradient id="rb" cx="0.4" cy="0.35" r="0.7"><stop offset="0" stop-color="#ffb0b0"/><stop offset="0.5" stop-color="#e84848"/><stop offset="1" stop-color="#a01818"/></radialGradient></defs><circle cx="9" cy="9" r="8" fill="url(#rb)"/></svg>
<div class="a" style="left:726px;top:76px;width:1px;height:23px;background:#a8a8a8;box-shadow:1px 0 0 #fff"></div>
<svg class="a" style="left:736px;top:78px" width="20" height="21" viewBox="0 0 20 21"><path d="M1,10 L9,5 L19,9 L19,15 L11,20 L1,16Z" fill="#c8c8c8" stroke="#b4b4b4"/><path d="M3,8 L10,3 L17,7 L10,11Z" fill="#dedede" stroke="#bbb"/><path d="M1,10 L11,14 L19,9 M11,14 V20" stroke="#aaa" fill="none"/></svg>
<svg class="a" style="left:786px;top:78px" width="20" height="21" viewBox="0 0 20 21"><path d="M2,10 L9,6 L18,10 L18,16 L11,20 L2,16Z" fill="#e8e8e8" stroke="#ccc"/><path d="M2,4 L8,1 L8,12 L2,10Z" fill="#dedede" stroke="#ccc"/></svg>
<svg class="a" style="left:811px;top:78px" width="20" height="21" viewBox="0 0 20 21"><path d="M2,10 L9,6 L18,10 L18,16 L11,20 L2,16Z" fill="#e6e6e6" stroke="#ccc"/><path d="M7,4 L13,7 L10,13 L6,10Z" fill="#fff" stroke="#ccc"/><path d="M8,6 L12,12" stroke="#aaa"/></svg>
<svg class="a" style="left:836px;top:78px" width="20" height="21" viewBox="0 0 20 21"><path d="M2,10 L9,6 L18,10 L18,16 L11,20 L2,16Z" fill="#e6e6e6" stroke="#ccc"/><path d="M4,7 L11,3 L17,6 L10,10Z" fill="#f2f2f2" stroke="#ccc"/></svg>
<svg class="a" style="left:860px;top:78px" width="20" height="21" viewBox="0 0 20 21"><path d="M2,10 L9,6 L18,10 L18,16 L11,20 L2,16Z" fill="#e6e6e6" stroke="#ccc"/><rect x="9" y="1" width="6" height="14" rx="3" fill="#f4f4f4" stroke="#ccc"/></svg>
<svg class="a" style="left:885px;top:78px" width="20" height="21" viewBox="0 0 20 21"><path d="M3,7 Q10,0 17,7 M17,13 Q10,20 3,13" stroke="#d0d0d0" stroke-width="3" fill="none"/><path d="M1,6 L6,3 L6,9Z M19,14 L14,17 L14,11Z" fill="#c8c8c8"/></svg>
<div class="a" style="left:758px;top:76px;width:25px;height:23px;border:1px solid #707070;border-radius:3px;background:linear-gradient(#e6e6e6,#d2d2d2)"></div>
<svg class="a" style="left:761px;top:79px" width="20" height="18" viewBox="0 0 20 18"><path d="M2,9 L9,5 L18,9 L18,15 L11,18 L2,14Z" fill="#dcdcdc" stroke="#c4c4c4"/><path d="M4,6 L10,2 L10,11 L4,13Z" fill="#ebebeb" stroke="#c4c4c4"/></svg>
<div class="a" style="left:911px;top:76px;width:1px;height:23px;background:#a8a8a8;box-shadow:1px 0 0 #fff"></div>
<svg class="a" style="left:924px;top:78px" width="18" height="21" viewBox="0 0 18 21"><defs><linearGradient id="gb" x1="0" x2="1"><stop offset="0" stop-color="#d8d8d8"/><stop offset="0.5" stop-color="#f4f4f4"/><stop offset="1" stop-color="#c8c8c8"/></linearGradient></defs><rect x="1" y="1" width="12" height="19" fill="url(#gb)" stroke="#d0d0d0"/><path d="M11,20 L17,20 L17,14Z" fill="#888"/></svg>
<div class="a" style="left:946px;top:76px;width:1px;height:23px;background:#a8a8a8;box-shadow:1px 0 0 #fff"></div>
<svg class="a" style="left:955px;top:78px" width="20" height="21" viewBox="0 0 20 21"><path d="M2,8 L9,4 L16,8 L16,12 L9,16 L2,12Z" fill="#d8d8d8" stroke="#bbb"/><path d="M2,8 L9,12 L16,8" stroke="#bbb" fill="none"/><rect x="4" y="15" width="4" height="5" fill="#ccc"/><path d="M18,10 V18 H11 M13,16 L11,18 L13,20" stroke="#c4c4c4" stroke-width="1.6" fill="none"/></svg>
<svg class="a" style="left:980px;top:78px" width="20" height="21" viewBox="0 0 20 21"><path d="M2,8 L9,4 L16,8 L16,12 L9,16 L2,12Z" fill="#d8d8d8" stroke="#bbb"/><path d="M2,8 L9,12 L16,8" stroke="#bbb" fill="none"/><rect x="4" y="15" width="4" height="5" fill="#ccc"/><path d="M11,18 H18 V10 M16,12 L18,10 L20,12" stroke="#c4c4c4" stroke-width="1.6" fill="none"/></svg>
<svg class="a" style="left:1005px;top:78px" width="20" height="21" viewBox="0 0 20 21"><rect x="1" y="2" width="18" height="17" fill="#bdbdbd" stroke="#a8a8a8"/><rect x="4" y="3" width="12" height="6" fill="#ececec"/><rect x="4" y="11" width="12" height="7" fill="#e2e2e2"/></svg>
<div class="a" style="left:1031px;top:76px;width:1px;height:23px;background:#a8a8a8;box-shadow:1px 0 0 #fff"></div>
<svg class="a" style="left:1041px;top:79px" width="18" height="18" viewBox="0 0 18 18"><rect x="1" y="1" width="16" height="16" rx="2" fill="#dcdcdc" stroke="#cfcfcf"/><circle cx="9" cy="9" r="5.5" fill="none" stroke="#f4f4f4" stroke-width="1.6"/><rect x="8" y="5" width="2" height="6" fill="#f4f4f4"/></svg>
<div class="a" style="left:1070px;top:83px;width:15px;height:14px;background:#e3ebf5;border-top:1px solid #a7b7c9;border-right:1px solid #a7b7c9"></div>
<svg class="a" style="left:1073px;top:87px" width="9" height="9" viewBox="0 0 9 9"><path d="M1,1L8,8M8,1L1,8" stroke="#637386" stroke-width="2.2"/></svg>
<div class="a" style="left:1088px;top:74px;width:1px;height:28px;background:#b4b4b4"></div>

<div class="a" style="left:0;top:103px;width:253px;height:883px;background:#f0f0f0"></div>
<div class="a" style="left:4px;top:110px;width:211px;height:2px;border-top:1px solid #8d8d8d;border-bottom:1px solid #fff"></div>
<div class="a" style="left:4px;top:114px;width:211px;height:2px;border-top:1px solid #8d8d8d;border-bottom:1px solid #fff"></div>
<div class="a" style="left:217px;top:106px;width:12px;height:12px;border-top:1px solid #9aa4b0;border-right:1px solid #9aa4b0;background:#e8eef6"></div>
<svg class="a" style="left:218px;top:108px" width="10" height="10"><rect x="3.5" y="0.5" width="6" height="5" fill="none" stroke="#5f6d7c" stroke-width="1.3"/><rect x="0.5" y="3.5" width="6" height="5.5" fill="#e8eef6" stroke="#5f6d7c" stroke-width="1.3"/></svg>
<div class="a" style="left:231px;top:106px;width:12px;height:12px;border-top:1px solid #9aa4b0;border-right:1px solid #9aa4b0;background:#e8eef6"></div>
<svg class="a" style="left:233px;top:109px" width="8" height="8"><path d="M1,1L7,7M7,1L1,7" stroke="#5f6d7c" stroke-width="1.8"/></svg>
<div class="a" style="left:2px;top:120px;width:243px;height:864px;border:1px solid #d4d4d4;border-top:2px solid #6f6f6f;border-left:2px solid #8a8a8a;background:#f0f0f0"></div>
<div class="a" style="left:4px;top:157px;width:240px;height:5px;border-top:1px solid #8e8e8e;border-bottom:1px solid #a8a8a8;background:#f4f4f4"></div>
<div class="a" style="left:9px;top:126px;width:36px;height:32px;background:#fff;border:1px solid #8c8c8c;border-bottom:none"></div>
<svg class="a" style="left:16px;top:131px" width="24" height="24"><path d="M2.5,2V20H8M2.5,6H8.5V16H13M8.5,9H14.5V12.5H19.5" fill="none" stroke="#111" stroke-width="1.2"/><g fill="#1010d0"><rect x="0.5" y="0" width="4" height="4"/><rect x="6.5" y="4" width="4" height="4"/><rect x="12.5" y="7" width="4" height="4"/><rect x="17.5" y="10.5" width="4" height="4"/><rect x="12" y="14" width="4" height="4"/><rect x="6.5" y="18" width="4" height="4"/></g></svg>
<div class="a" style="left:44px;top:126px;width:35px;height:32px;background:linear-gradient(#efefef 0,#ececec 45%,#d6d6d6 46%,#d4d4d4 100%);border:1px solid #8c8c8c;border-bottom:none"></div>
<svg class="a" style="left:49px;top:131px" width="24" height="24"><defs><radialGradient id="gl" cx="0.35" cy="0.3" r="0.8"><stop offset="0" stop-color="#19b7e6"/><stop offset="1" stop-color="#0a3aa8"/></radialGradient></defs><circle cx="12" cy="12" r="11" fill="url(#gl)"/><path d="M12,2 C16,2 22,6 22,12 C22,16 19,20 16,22 C16,18 16,16 14,13 C12,12 11,10 12,8 C13,6 14,4 12,2Z M2.5,11 C5,10 7,11 8,13 C9,16 8,18 7,20 C4,18 2.5,15 2.5,11Z" fill="#3dc51e"/></svg>
<div class="a" style="left:78px;top:126px;width:36px;height:32px;background:#cbcbcb;border:1px solid #8c8c8c;border-bottom:none"></div>
<svg class="a" style="left:86px;top:133px" width="20" height="20"><path d="M2,3 Q10,0 18,3 L16,18 Q10,20 4,18Z" fill="#f0f0f0" stroke="#dcdcdc"/></svg>
<div class="a" style="left:4px;top:162px;width:240px;height:820px;background:#fff;border-right:1px solid #e4e4e4;border-bottom:1px solid #e4e4e4"></div>
<div class="a" style="left:251px;top:103px;width:1px;height:883px;background:#c8c8c8"></div>
<div class="a" style="left:252px;top:103px;width:1px;height:883px;background:#7a7a7a"></div>
<div class="a" style="left:15px;top:172px;width:1px;height:397px;background:repeating-linear-gradient(#9a9a9a 0 1px,transparent 1px 2px)"></div>
<div class="a" style="left:34px;top:214px;width:1px;height:67px;background:repeating-linear-gradient(#9a9a9a 0 1px,transparent 1px 2px)"></div>
<div class="a" style="left:34px;top:323px;width:1px;height:30px;background:repeating-linear-gradient(#9a9a9a 0 1px,transparent 1px 2px)"></div>
<div class="a" style="left:34px;top:413px;width:1px;height:66px;background:repeating-linear-gradient(#9a9a9a 0 1px,transparent 1px 2px)"></div>
<div class="a" style="left:16px;top:171px;width:10px;height:1px;background:repeating-linear-gradient(90deg,#9a9a9a 0 1px,transparent 1px 2px)"></div>
<svg class="a" style="left:26px;top:163px" width="17" height="17"><path d="M2,2H14V5H10V8L12,10V12H4V5H2Z" fill="#a9c6d4" stroke="#2c5366"/><path d="M4,12H15V15H4Z" fill="#6aa0b8" stroke="#2c5366"/><path d="M6,4H9V11H6Z" fill="#e0eef4" stroke="#2c5366"/></svg>
<div class="a" style="left:47px;top:163px;line-height:16px;white-space:nowrap;">Macchina Utensile</div>
<div class="a" style="left:16px;top:189px;width:10px;height:1px;background:repeating-linear-gradient(90deg,#9a9a9a 0 1px,transparent 1px 2px)"></div>
<div class="a" style="left:11px;top:185px;width:9px;height:9px;border:1px solid #a5aab2;border-radius:1px;background:linear-gradient(#fff,#e4e6ea)"></div>
<div class="a" style="left:13px;top:189px;width:5px;height:1px;background:#2a4070"></div>
<div class="a" style="left:15px;top:187px;width:1px;height:5px;background:#2a4070"></div>
<svg class="a" style="left:26px;top:181px" width="17" height="17"><g stroke="#2a6d9a" stroke-width="0.8"><rect x="6" y="1" width="9" height="12" fill="#9fd3ef"/><rect x="3.5" y="2.5" width="9" height="12" fill="#87c6ea"/><rect x="1" y="4" width="9" height="12" fill="#6cb8e4"/></g><g fill="#fff"><rect x="2.5" y="6" width="2" height="2"/><rect x="6" y="9" width="2" height="2"/><rect x="3" y="12" width="2" height="2"/></g></svg>
<div class="a" style="left:47px;top:181px;line-height:16px;white-space:nowrap;">Programmi NC</div>
<div class="a" style="left:16px;top:207px;width:10px;height:1px;background:repeating-linear-gradient(90deg,#9a9a9a 0 1px,transparent 1px 2px)"></div>
<div class="a" style="left:11px;top:203px;width:9px;height:9px;border:1px solid #a5aab2;border-radius:1px;background:linear-gradient(#fff,#e4e6ea)"></div>
<div class="a" style="left:13px;top:207px;width:5px;height:1px;background:#2a4070"></div>
<svg class="a" style="left:26px;top:199px" width="17" height="17"><path d="M1,8.5 L8.5,15.5 Q10.5,16.5 12,14 L5,6.5 Q4.5,3.5 7,3 L14,10 Q16.5,10.5 16.5,8 L9.5,1" fill="none" stroke="#28b030" stroke-width="2.1" stroke-linejoin="round"/></svg>
<div class="a" style="left:47px;top:199px;line-height:16px;white-space:nowrap;">Percorsi</div>
<div class="a" style="left:35px;top:226px;width:10px;height:1px;background:repeating-linear-gradient(90deg,#9a9a9a 0 1px,transparent 1px 2px)"></div>
<div class="a" style="left:30px;top:222px;width:9px;height:9px;border:1px solid #a5aab2;border-radius:1px;background:linear-gradient(#fff,#e4e6ea)"></div>
<div class="a" style="left:32px;top:226px;width:5px;height:1px;background:#2a4070"></div>
<div class="a" style="left:34px;top:224px;width:1px;height:5px;background:#2a4070"></div>
<div class="a" style="left:45px;top:219px;width:15px;height:15px;border:1px solid #c8c8c8;border-radius:4px;background:#fff"></div>
<svg class="a" style="left:47px;top:220px" width="12" height="13"><path d="M1,7 L4.5,11.5 L11,1" fill="none" stroke="#000" stroke-width="1.4"/></svg>
<svg class="a" style="left:64px;top:220px" width="10" height="15"><ellipse cx="5" cy="5" rx="4.3" ry="5" fill="#a4a4a4"/><path d="M3,8.5 H7 V12 Q5,14.5 3,12Z" fill="#6a3a2a"/></svg>
<svg class="a" style="left:77px;top:218px" width="17" height="17"><g stroke="#0e5e14" stroke-width="0.7"><path d="M1,11 L8,7 L15,11 L8,15Z" fill="#2aa43a"/><path d="M1,8 L8,4 L15,8 L8,12Z" fill="#3cbc4a"/><path d="M1,5 L8,1 L15,5 L8,9Z" fill="#5ad060"/></g></svg>
<div class="a" style="left:98px;top:218px;line-height:16px;white-space:nowrap;">sgrossatura dx</div>
<div class="a" style="left:35px;top:244px;width:10px;height:1px;background:repeating-linear-gradient(90deg,#9a9a9a 0 1px,transparent 1px 2px)"></div>
<div class="a" style="left:30px;top:240px;width:9px;height:9px;border:1px solid #a5aab2;border-radius:1px;background:linear-gradient(#fff,#e4e6ea)"></div>
<div class="a" style="left:32px;top:244px;width:5px;height:1px;background:#2a4070"></div>
<div class="a" style="left:34px;top:242px;width:1px;height:5px;background:#2a4070"></div>
<div class="a" style="left:45px;top:237px;width:15px;height:15px;border:1px solid #c8c8c8;border-radius:4px;background:#fff"></div>
<svg class="a" style="left:47px;top:238px" width="12" height="13"><path d="M1,7 L4.5,11.5 L11,1" fill="none" stroke="#000" stroke-width="1.4"/></svg>
<svg class="a" style="left:64px;top:238px" width="10" height="15"><ellipse cx="5" cy="5" rx="4.3" ry="5" fill="#a4a4a4"/><path d="M3,8.5 H7 V12 Q5,14.5 3,12Z" fill="#6a3a2a"/></svg>
<svg class="a" style="left:77px;top:236px" width="17" height="17"><g stroke="#0e5e14" stroke-width="0.7"><path d="M1,11 L8,7 L15,11 L8,15Z" fill="#2aa43a"/><path d="M1,8 L8,4 L15,8 L8,12Z" fill="#3cbc4a"/><path d="M1,5 L8,1 L15,5 L8,9Z" fill="#5ad060"/></g></svg>
<div class="a" style="left:98px;top:236px;line-height:16px;white-space:nowrap;">sgrossatura sx</div>
<div class="a" style="left:35px;top:262px;width:10px;height:1px;background:repeating-linear-gradient(90deg,#9a9a9a 0 1px,transparent 1px 2px)"></div>
<div class="a" style="left:30px;top:258px;width:9px;height:9px;border:1px solid #a5aab2;border-radius:1px;background:linear-gradient(#fff,#e4e6ea)"></div>
<div class="a" style="left:32px;top:262px;width:5px;height:1px;background:#2a4070"></div>
<div class="a" style="left:34px;top:260px;width:1px;height:5px;background:#2a4070"></div>
<div class="a" style="left:45px;top:255px;width:15px;height:15px;border:1px solid #c8c8c8;border-radius:4px;background:#fff"></div>
<svg class="a" style="left:47px;top:256px" width="12" height="13"><path d="M1,7 L4.5,11.5 L11,1" fill="none" stroke="#000" stroke-width="1.4"/></svg>
<svg class="a" style="left:64px;top:256px" width="10" height="15"><ellipse cx="5" cy="5" rx="4.3" ry="5" fill="#a4a4a4"/><path d="M3,8.5 H7 V12 Q5,14.5 3,12Z" fill="#6a3a2a"/></svg>
<svg class="a" style="left:77px;top:254px" width="17" height="17"><path d="M1,10 Q8,6 15,10 L15,14 Q8,17 1,14Z" fill="#2fa83a" stroke="#0e5e14" stroke-width="0.7"/><path d="M3,9 Q8,1 13,9Z" fill="#7a3a1e"/><path d="M6,5 Q8,2 11,4 Q11,7 9,8 L9,9" fill="none" stroke="#111" stroke-width="1.8"/></svg>
<div class="a" style="left:98px;top:254px;line-height:16px;white-space:nowrap;">finitura dx</div>
<div class="a" style="left:35px;top:280px;width:10px;height:1px;background:repeating-linear-gradient(90deg,#9a9a9a 0 1px,transparent 1px 2px)"></div>
<div class="a" style="left:30px;top:276px;width:9px;height:9px;border:1px solid #a5aab2;border-radius:1px;background:linear-gradient(#fff,#e4e6ea)"></div>
<div class="a" style="left:32px;top:280px;width:5px;height:1px;background:#2a4070"></div>
<div class="a" style="left:34px;top:278px;width:1px;height:5px;background:#2a4070"></div>
<div class="a" style="left:45px;top:273px;width:15px;height:15px;border:1px solid #c8c8c8;border-radius:4px;background:#fff"></div>
<svg class="a" style="left:47px;top:274px" width="12" height="13"><path d="M1,7 L4.5,11.5 L11,1" fill="none" stroke="#000" stroke-width="1.4"/></svg>
<svg class="a" style="left:64px;top:274px" width="10" height="15"><ellipse cx="5" cy="5" rx="4.3" ry="5" fill="#a4a4a4"/><path d="M3,8.5 H7 V12 Q5,14.5 3,12Z" fill="#6a3a2a"/></svg>
<svg class="a" style="left:77px;top:272px" width="17" height="17"><path d="M1,10 Q8,6 15,10 L15,14 Q8,17 1,14Z" fill="#2fa83a" stroke="#0e5e14" stroke-width="0.7"/><path d="M3,9 Q8,1 13,9Z" fill="#7a3a1e"/><path d="M6,5 Q8,2 11,4 Q11,7 9,8 L9,9" fill="none" stroke="#111" stroke-width="1.8"/></svg>
<div class="a" style="left:98px;top:272px;line-height:16px;white-space:nowrap;">finitura sx</div>
<div class="a" style="left:16px;top:298px;width:10px;height:1px;background:repeating-linear-gradient(90deg,#9a9a9a 0 1px,transparent 1px 2px)"></div>
<div class="a" style="left:11px;top:294px;width:9px;height:9px;border:1px solid #a5aab2;border-radius:1px;background:linear-gradient(#fff,#e4e6ea)"></div>
<div class="a" style="left:13px;top:298px;width:5px;height:1px;background:#2a4070"></div>
<div class="a" style="left:15px;top:296px;width:1px;height:5px;background:#2a4070"></div>
<svg class="a" style="left:26px;top:290px" width="17" height="17"><g stroke="#7a6010" stroke-width="0.6"><rect x="2" y="7" width="4" height="8" fill="#e4c040"/><rect x="6.5" y="5" width="4" height="8" fill="#e4c040"/><rect x="11" y="2" width="4" height="8" fill="#e4c040"/><rect x="1.5" y="5" width="5" height="3" fill="#ccc"/><rect x="6" y="3" width="5" height="3" fill="#ccc"/><rect x="10.5" y="0.5" width="5" height="3" fill="#ccc"/></g></svg>
<div class="a" style="left:47px;top:290px;line-height:16px;white-space:nowrap;font-weight:bold;">Utensili</div>
<div class="a" style="left:16px;top:316px;width:10px;height:1px;background:repeating-linear-gradient(90deg,#9a9a9a 0 1px,transparent 1px 2px)"></div>
<div class="a" style="left:11px;top:312px;width:9px;height:9px;border:1px solid #a5aab2;border-radius:1px;background:linear-gradient(#fff,#e4e6ea)"></div>
<div class="a" style="left:13px;top:316px;width:5px;height:1px;background:#2a4070"></div>
<svg class="a" style="left:26px;top:308px" width="17" height="17"><path d="M3,4 Q6,1 9,3 Q13,1 15,5 Q16,10 12,13 Q8,16 4,13 Q1,10 2,7 Q2,5 3,4Z" fill="none" stroke="#1e90b8" stroke-width="1.8"/></svg>
<div class="a" style="left:47px;top:308px;line-height:16px;white-space:nowrap;">Boundary</div>
<div class="a" style="left:35px;top:334px;width:10px;height:1px;background:repeating-linear-gradient(90deg,#9a9a9a 0 1px,transparent 1px 2px)"></div>
<div class="a" style="left:30px;top:330px;width:9px;height:9px;border:1px solid #a5aab2;border-radius:1px;background:linear-gradient(#fff,#e4e6ea)"></div>
<div class="a" style="left:32px;top:334px;width:5px;height:1px;background:#2a4070"></div>
<div class="a" style="left:34px;top:332px;width:1px;height:5px;background:#2a4070"></div>
<svg class="a" style="left:64px;top:328px" width="10" height="15"><ellipse cx="5" cy="5" rx="4.3" ry="5" fill="#a4a4a4"/><path d="M3,8.5 H7 V12 Q5,14.5 3,12Z" fill="#6a3a2a"/></svg>
<svg class="a" style="left:77px;top:326px" width="17" height="17"><path d="M3,4 Q6,1 9,3 Q13,1 15,5 Q16,10 12,13 Q8,16 4,13 Q1,10 2,7 Q2,5 3,4Z" fill="none" stroke="#1e90b8" stroke-width="1.8"/></svg>
<div class="a" style="left:98px;top:326px;line-height:16px;white-space:nowrap;">3</div>
<div class="a" style="left:35px;top:352px;width:10px;height:1px;background:repeating-linear-gradient(90deg,#9a9a9a 0 1px,transparent 1px 2px)"></div>
<div class="a" style="left:30px;top:348px;width:9px;height:9px;border:1px solid #a5aab2;border-radius:1px;background:linear-gradient(#fff,#e4e6ea)"></div>
<div class="a" style="left:32px;top:352px;width:5px;height:1px;background:#2a4070"></div>
<div class="a" style="left:34px;top:350px;width:1px;height:5px;background:#2a4070"></div>
<svg class="a" style="left:64px;top:346px" width="10" height="15"><ellipse cx="5" cy="5" rx="4.3" ry="5" fill="#a4a4a4"/><path d="M3,8.5 H7 V12 Q5,14.5 3,12Z" fill="#6a3a2a"/></svg>
<svg class="a" style="left:77px;top:344px" width="17" height="17"><path d="M3,4 Q6,1 9,3 Q13,1 15,5 Q16,10 12,13 Q8,16 4,13 Q1,10 2,7 Q2,5 3,4Z" fill="none" stroke="#1e90b8" stroke-width="1.8"/></svg>
<div class="a" style="left:98px;top:344px;line-height:16px;white-space:nowrap;">4</div>
<div class="a" style="left:16px;top:370px;width:10px;height:1px;background:repeating-linear-gradient(90deg,#9a9a9a 0 1px,transparent 1px 2px)"></div>
<svg class="a" style="left:26px;top:362px" width="17" height="17"><path d="M2,13 L11,4 Q13,1.5 15,3 Q16.5,5 14,7 L5,15.5 Q3,17 1.5,15.5 Q0.5,14 2,13Z" fill="#d4ecf2" stroke="#3a8a9a" stroke-width="1.2"/><path d="M4,4 Q2,2.5 3.5,1.5 Q5,0.5 6,2 L12,9 Q14,11 12.5,12 Q11,13 9.5,11Z" fill="#d4ecf2" stroke="#3a8a9a" stroke-width="1.2"/><path d="M7,9 L11,5 M9,11 L13,7" stroke="#3a8a9a" stroke-width="0.9"/></svg>
<div class="a" style="left:47px;top:362px;line-height:16px;white-space:nowrap;">Pattern</div>
<div class="a" style="left:16px;top:388px;width:10px;height:1px;background:repeating-linear-gradient(90deg,#9a9a9a 0 1px,transparent 1px 2px)"></div>
<svg class="a" style="left:26px;top:380px" width="17" height="17"><rect x="1" y="7" width="8" height="8" fill="#e8c040" stroke="#7a6010"/><circle cx="11" cy="5" r="4.5" fill="#f0d070" stroke="#7a6010"/></svg>
<div class="a" style="left:47px;top:380px;line-height:16px;white-space:nowrap;">Insiemi di feature</div>
<div class="a" style="left:16px;top:406px;width:10px;height:1px;background:repeating-linear-gradient(90deg,#9a9a9a 0 1px,transparent 1px 2px)"></div>
<div class="a" style="left:11px;top:402px;width:9px;height:9px;border:1px solid #a5aab2;border-radius:1px;background:linear-gradient(#fff,#e4e6ea)"></div>
<div class="a" style="left:13px;top:406px;width:5px;height:1px;background:#2a4070"></div>
<svg class="a" style="left:26px;top:398px" width="17" height="17"><g stroke="#5aaabc" stroke-width="1.3" fill="none"><path d="M3,15 V4 M3,15 L12,6 M3,15 H15"/><path d="M5,13 V2 M5,13 L14,4 M5,13 H16" opacity="0.7"/></g><path d="M2,15 L5,13" stroke="#2a7a8c" stroke-width="2"/><circle cx="3" cy="15" r="2" fill="#8ad0e4"/></svg>
<div class="a" style="left:47px;top:398px;line-height:16px;white-space:nowrap;font-weight:bold;">Piani di Lavoro</div>
<div class="a" style="left:35px;top:424px;width:10px;height:1px;background:repeating-linear-gradient(90deg,#9a9a9a 0 1px,transparent 1px 2px)"></div>
<svg class="a" style="left:64px;top:418px" width="10" height="15"><ellipse cx="5" cy="5" rx="4.3" ry="5" fill="#a4a4a4"/><path d="M3,8.5 H7 V12 Q5,14.5 3,12Z" fill="#6a3a2a"/></svg>
<svg class="a" style="left:77px;top:416px" width="17" height="17"><path d="M3,13 V2 M3,13 L12,4 M3,13 H15" stroke="#2a7a8c" stroke-width="1.9" fill="none"/><path d="M1,4.5 L3,1 L5,4.5 M9,3.5 L12.8,3.2 L12.5,7 M12.5,10.5 L16,13 L12.5,15.5" stroke="#2a7a8c" stroke-width="1.5" fill="none"/><circle cx="3.5" cy="13" r="2.8" fill="#78c4dc"/></svg>
<div class="a" style="left:98px;top:416px;line-height:16px;white-space:nowrap;">1</div>
<div class="a" style="left:35px;top:442px;width:10px;height:1px;background:repeating-linear-gradient(90deg,#9a9a9a 0 1px,transparent 1px 2px)"></div>
<svg class="a" style="left:64px;top:436px" width="10" height="15"><ellipse cx="5" cy="5" rx="4.3" ry="5" fill="#a4a4a4"/><path d="M3,8.5 H7 V12 Q5,14.5 3,12Z" fill="#6a3a2a"/></svg>
<svg class="a" style="left:77px;top:434px" width="17" height="17"><path d="M3,13 V2 M3,13 L12,4 M3,13 H15" stroke="#2a7a8c" stroke-width="1.9" fill="none"/><path d="M1,4.5 L3,1 L5,4.5 M9,3.5 L12.8,3.2 L12.5,7 M12.5,10.5 L16,13 L12.5,15.5" stroke="#2a7a8c" stroke-width="1.5" fill="none"/><circle cx="3.5" cy="13" r="2.8" fill="#78c4dc"/></svg>
<div class="a" style="left:98px;top:434px;line-height:16px;white-space:nowrap;">2</div>
<div class="a" style="left:35px;top:460px;width:10px;height:1px;background:repeating-linear-gradient(90deg,#9a9a9a 0 1px,transparent 1px 2px)"></div>
<svg class="a" style="left:64px;top:454px" width="10" height="15"><ellipse cx="5" cy="5" rx="4.3" ry="5" fill="#f5e41e"/><path d="M3,8.5 H7 V12 Q5,14.5 3,12Z" fill="#6a3a2a"/></svg>
<svg class="a" style="left:77px;top:452px" width="17" height="17"><path d="M3,13 V2 M3,13 L12,4 M3,13 H15" stroke="#2a7a8c" stroke-width="1.9" fill="none"/><path d="M1,4.5 L3,1 L5,4.5 M9,3.5 L12.8,3.2 L12.5,7 M12.5,10.5 L16,13 L12.5,15.5" stroke="#2a7a8c" stroke-width="1.5" fill="none"/><circle cx="3.5" cy="13" r="2.8" fill="#78c4dc"/></svg>
<div class="a" style="left:96px;top:452px;width:46px;height:17px;background:#ececec"></div>
<div class="a" style="left:98px;top:452px;line-height:16px;white-space:nowrap;font-weight:bold;">&gt; 2_1_1</div>
<div class="a" style="left:35px;top:478px;width:10px;height:1px;background:repeating-linear-gradient(90deg,#9a9a9a 0 1px,transparent 1px 2px)"></div>
<svg class="a" style="left:64px;top:472px" width="10" height="15"><ellipse cx="5" cy="5" rx="4.3" ry="5" fill="#a4a4a4"/><path d="M3,8.5 H7 V12 Q5,14.5 3,12Z" fill="#6a3a2a"/></svg>
<svg class="a" style="left:77px;top:470px" width="17" height="17"><path d="M3,13 V2 M3,13 L12,4 M3,13 H15" stroke="#2a7a8c" stroke-width="1.9" fill="none"/><path d="M1,4.5 L3,1 L5,4.5 M9,3.5 L12.8,3.2 L12.5,7 M12.5,10.5 L16,13 L12.5,15.5" stroke="#2a7a8c" stroke-width="1.5" fill="none"/><circle cx="3.5" cy="13" r="2.8" fill="#78c4dc"/></svg>
<div class="a" style="left:98px;top:470px;line-height:16px;white-space:nowrap;">1_1</div>
<div class="a" style="left:16px;top:496px;width:10px;height:1px;background:repeating-linear-gradient(90deg,#9a9a9a 0 1px,transparent 1px 2px)"></div>
<div class="a" style="left:11px;top:492px;width:9px;height:9px;border:1px solid #a5aab2;border-radius:1px;background:linear-gradient(#fff,#e4e6ea)"></div>
<div class="a" style="left:13px;top:496px;width:5px;height:1px;background:#2a4070"></div>
<div class="a" style="left:15px;top:494px;width:1px;height:5px;background:#2a4070"></div>
<svg class="a" style="left:26px;top:488px" width="17" height="17"><path d="M1,12 L8,9 L15,12 L8,15Z" fill="#6ac0e0" stroke="#1e6080" stroke-width="0.7"/><path d="M1,8 L8,5 L15,8 L8,11Z" fill="#f0e060" stroke="#807010" stroke-width="0.7"/><path d="M1,5 L8,2 L15,5 L8,8Z" fill="#a0e0f0" stroke="#1e6080" stroke-width="0.7"/></svg>
<div class="a" style="left:47px;top:488px;line-height:16px;white-space:nowrap;">Livelli</div>
<div class="a" style="left:16px;top:514px;width:10px;height:1px;background:repeating-linear-gradient(90deg,#9a9a9a 0 1px,transparent 1px 2px)"></div>
<div class="a" style="left:11px;top:510px;width:9px;height:9px;border:1px solid #a5aab2;border-radius:1px;background:linear-gradient(#fff,#e4e6ea)"></div>
<div class="a" style="left:13px;top:514px;width:5px;height:1px;background:#2a4070"></div>
<div class="a" style="left:15px;top:512px;width:1px;height:5px;background:#2a4070"></div>
<svg class="a" style="left:26px;top:506px" width="17" height="17"><path d="M1,6 L6,3 L16,5 V12 L11,15 L1,13Z" fill="#3aa0c0" stroke="#0e4060" stroke-width="0.9"/><path d="M4,8 L10,9 V13 L4,12Z" fill="#1e6a88"/></svg>
<div class="a" style="left:47px;top:506px;line-height:16px;white-space:nowrap;">Modelli</div>
<div class="a" style="left:16px;top:532px;width:10px;height:1px;background:repeating-linear-gradient(90deg,#9a9a9a 0 1px,transparent 1px 2px)"></div>
<svg class="a" style="left:26px;top:524px" width="17" height="17"><path d="M1,12 L8.5,8 L16,12 L8.5,16Z" fill="#b01cb0"/><path d="M1,12 V13 L8.5,17 L16,13 V12 L8.5,16Z" fill="#901090"/><path d="M3,9 L8.5,6 L14,9 L8.5,12Z" fill="#cc30cc"/><path d="M3,9 V10.5 L8.5,13.5 L14,10.5 V9 L8.5,12Z" fill="#a018a0"/><path d="M5,6 L8.5,4 L12,6 L8.5,8Z" fill="#e050e0"/><path d="M5,6 V7.5 L8.5,9.5 L12,7.5 V6 L8.5,8Z" fill="#b828b8"/><path d="M7,3 L8.5,2 L10,3 L8.5,4Z" fill="#f070f0"/></svg>
<div class="a" style="left:47px;top:524px;line-height:16px;white-space:nowrap;">Modelli Materiale Residuo</div>
<div class="a" style="left:16px;top:550px;width:10px;height:1px;background:repeating-linear-gradient(90deg,#9a9a9a 0 1px,transparent 1px 2px)"></div>
<svg class="a" style="left:26px;top:542px" width="17" height="17"><path d="M3,6 L9,2 L15,5 L15,10 L9,14 L3,11Z" fill="#9ed8e0" stroke="#7ab"/><path d="M1,9 L6,6 L11,9 L11,13 L6,16 L1,13Z" fill="#b8e4ec" stroke="#7ab"/></svg>
<div class="a" style="left:47px;top:542px;line-height:16px;white-space:nowrap;">Gruppi</div>
<div class="a" style="left:16px;top:568px;width:10px;height:1px;background:repeating-linear-gradient(90deg,#9a9a9a 0 1px,transparent 1px 2px)"></div>
<div class="a" style="left:11px;top:564px;width:9px;height:9px;border:1px solid #a5aab2;border-radius:1px;background:linear-gradient(#fff,#e4e6ea)"></div>
<div class="a" style="left:13px;top:568px;width:5px;height:1px;background:#2a4070"></div>
<div class="a" style="left:15px;top:566px;width:1px;height:5px;background:#2a4070"></div>
<svg class="a" style="left:26px;top:560px" width="17" height="17"><rect x="1" y="3" width="15" height="10" rx="1.5" fill="#2a6a90" stroke="#0e3050"/><rect x="3" y="5" width="11" height="4" fill="#9ad0f0"/><g fill="#fff"><rect x="4" y="6" width="2" height="2"/><rect x="8" y="6" width="2" height="2"/></g></svg>
<div class="a" style="left:47px;top:560px;line-height:16px;white-space:nowrap;">Macro</div>
<div id="vp" class="a"><svg class="a" style="left:0;top:0" width="1637" height="883" viewBox="253 103 1637 883">
<defs>
<linearGradient id="gblue" x1="0" y1="0" x2="1" y2="1"><stop offset="0" stop-color="#2a9fea"/><stop offset="1" stop-color="#2597e0"/></linearGradient>
<linearGradient id="gscoop" x1="0" y1="1" x2="1" y2="0"><stop offset="0" stop-color="#8a391b"/><stop offset="0.85" stop-color="#8c3b1d"/><stop offset="0.95" stop-color="#a04e30"/><stop offset="1" stop-color="#8a391b"/></linearGradient>
</defs>
<g transform="translate(587,-339)"><polygon points="484.0,805.0 721.0,942.0 721.0,971.0 484.0,834.0" fill="#1d6aa6" stroke="#f29234" stroke-width="1"/>
<polygon points="721.0,942.0 1128.0,708.0 1128.0,738.0 721.0,971.0" fill="#1d6aa6" stroke="#f29234" stroke-width="1"/>
<polygon points="721.0,942.0 725.0,940.0 725.0,969.0 721.0,971.0" fill="#1d6aa6" stroke="#f29234" stroke-width="1"/>
<polygon points="484.0,805.0 891.0,570.0 1128.0,708.0 721.0,942.0" fill="#8a391b" stroke="#f29234" stroke-width="1"/>
<ellipse cx="548" cy="795" rx="22" ry="12.5" fill="#1d6aa6" stroke="#c98a58" stroke-width="1.2"/><line x1="532.16" y1="786.5" x2="532.16" y2="803.5" stroke="#c98a58" stroke-width="1"/><line x1="563.84" y1="786.5" x2="563.84" y2="803.5" stroke="#c98a58" stroke-width="1"/>
<ellipse cx="698" cy="889" rx="10" ry="6" fill="#1d6aa6" stroke="#c98a58" stroke-width="1.2"/><line x1="690.8" y1="884.92" x2="690.8" y2="893.08" stroke="#c98a58" stroke-width="1"/><line x1="705.2" y1="884.92" x2="705.2" y2="893.08" stroke="#c98a58" stroke-width="1"/><ellipse cx="698" cy="889" rx="7.8" ry="4.4" fill="none" stroke="#f39a30" stroke-width="1.4"/>
<ellipse cx="740" cy="906" rx="22" ry="12.5" fill="#1d6aa6" stroke="#c98a58" stroke-width="1.2"/><line x1="724.16" y1="897.5" x2="724.16" y2="914.5" stroke="#c98a58" stroke-width="1"/><line x1="755.84" y1="897.5" x2="755.84" y2="914.5" stroke="#c98a58" stroke-width="1"/>
<ellipse cx="902" cy="812" rx="22" ry="12.5" fill="#1d6aa6" stroke="#c98a58" stroke-width="1.2"/><line x1="886.16" y1="803.5" x2="886.16" y2="820.5" stroke="#c98a58" stroke-width="1"/><line x1="917.84" y1="803.5" x2="917.84" y2="820.5" stroke="#c98a58" stroke-width="1"/>
<ellipse cx="1064" cy="719" rx="22" ry="12.5" fill="#1d6aa6" stroke="#c98a58" stroke-width="1.2"/><line x1="1048.16" y1="710.5" x2="1048.16" y2="727.5" stroke="#c98a58" stroke-width="1"/><line x1="1079.84" y1="710.5" x2="1079.84" y2="727.5" stroke="#c98a58" stroke-width="1"/>
<line x1="771" y1="845" x2="958" y2="734" stroke="#101820" stroke-width="4"/>
<path d="M770.0,750.9 C780.4,745.4 812.1,728.8 832.4,718.0 C852.7,707.2 874.7,695.9 892.0,686.0 C909.3,676.1 925.0,666.9 936.0,658.5 C947.0,650.1 954.1,639.5 957.7,635.7 L957.7,731.5 L770.0,842.0 L770.0,750.9 Z" fill="#54200f" stroke="#f29234" stroke-width="1"/>
<path d="M962.4,630.4 L987.5,608.0 L1006.4,598.6 L1006.4,699.0 C1006.0,700.3 1005.6,704.4 1004.0,707.0 C1002.4,709.6 999.8,712.2 997.0,714.5 C994.2,716.8 988.7,719.9 987.0,721.0 L962.4,737.0 L962.4,630.4 Z" fill="#54200f" stroke="#f29234" stroke-width="1"/>
<line x1="987.5" y1="608" x2="987.5" y2="721" stroke="#f29234" stroke-width="1"/>
<path d="M607.0,756.0 C608.7,758.4 613.8,766.7 617.0,770.5 C620.2,774.3 621.0,776.2 626.5,778.6 C632.0,781.0 643.2,783.9 650.0,785.0 C656.8,786.1 661.8,785.7 667.0,785.0 C672.2,784.3 675.7,782.9 681.5,780.6 C687.3,778.4 691.2,776.9 702.0,771.5 C712.8,766.1 738.7,751.9 746.0,748.0 L746.0,861.0 C743.0,862.2 734.0,866.7 728.0,868.5 C722.0,870.3 716.2,871.5 710.0,872.0 C703.8,872.5 698.0,872.5 690.5,871.5 C683.0,870.5 671.5,867.9 665.0,866.0 C658.5,864.1 658.1,863.5 651.7,860.0 C645.3,856.5 633.0,849.3 626.7,845.0 C620.4,840.7 617.3,837.8 614.0,834.0 C610.7,830.2 608.2,824.0 607.0,822.0 L607.0,756.0 Z" fill="#54200f" stroke="#f29234" stroke-width="1"/>
<line x1="627" y1="779" x2="627" y2="843" stroke="#f29234" stroke-width="1"/>
<line x1="650" y1="785" x2="650" y2="858" stroke="#f29234" stroke-width="1"/>
<polygon points="626.5,778.6 650.0,785.0 650.0,858.0 627.0,843.0" fill="#1d6aa6" stroke="#f29234" stroke-width="1"/><polygon points="746.7,747.0 770.0,734.6 770.0,846.4 746.7,859.7" fill="#1d6aa6" stroke="#f29234" stroke-width="1"/><polygon points="957.7,635.7 986.3,618.0 986.3,721.5 962.4,737.5 957.7,736.0" fill="#1d6aa6" stroke="#f29234" stroke-width="1"/>
<path d="M607.0,756.0 C606.9,754.2 606.2,748.5 606.5,745.0 C606.8,741.5 607.8,738.2 609.0,735.0 C610.2,731.8 611.2,729.5 614.0,726.0 C616.8,722.5 620.3,717.9 625.5,714.0 C630.7,710.1 637.8,706.6 645.0,702.5 C652.2,698.4 665.0,691.7 669.0,689.5 L860.0,580.0 C862.5,578.7 870.2,573.9 875.0,572.0 C879.8,570.1 882.3,569.3 888.6,568.8 C894.9,568.3 906.1,568.3 913.0,568.8 C919.9,569.3 923.9,570.5 930.0,572.0 C936.1,573.5 941.8,574.9 949.6,577.6 C957.4,580.3 969.1,585.7 976.7,588.4 C984.3,591.1 990.6,592.8 995.0,594.0 C999.4,595.2 1001.1,594.7 1003.0,595.5 C1004.9,596.3 1005.8,598.1 1006.4,598.6 C1003.7,599.2 997.7,601.6 990.0,602.5 C982.3,603.4 966.7,603.5 960.0,604.0 C953.3,604.5 957.4,604.1 949.6,605.5 C941.8,606.9 924.3,609.2 913.0,612.5 C901.7,615.8 901.3,615.0 882.0,625.0 C862.7,635.0 816.2,661.8 797.0,672.6 C777.8,683.4 779.5,682.0 767.0,690.0 C754.5,698.0 732.8,713.0 722.0,720.5 C711.2,728.0 707.4,730.6 702.0,735.0 C696.6,739.4 692.4,743.8 689.6,747.0 C686.8,750.2 686.0,751.7 685.0,754.0 C684.0,756.3 683.6,758.8 683.5,761.0 C683.4,763.2 683.1,765.5 684.5,767.4 C685.9,769.3 688.9,771.6 691.6,772.5 C694.3,773.4 699.3,772.5 700.8,772.5 C697.6,773.9 687.1,778.5 681.5,780.6 C675.9,782.7 672.2,784.3 667.0,785.0 C661.8,785.7 656.8,786.1 650.0,785.0 C643.2,783.9 632.0,781.0 626.5,778.6 C621.0,776.2 620.2,774.3 617.0,770.5 C613.8,766.7 608.7,758.4 607.0,756.0 Z" fill="url(#gblue)" stroke="#c98a58" stroke-width="1"/>
<path d="M1006.4,598.6 C1003.7,599.2 997.7,601.6 990.0,602.5 C982.3,603.4 966.7,603.5 960.0,604.0 C953.3,604.5 957.4,604.1 949.6,605.5 C941.8,606.9 924.3,609.2 913.0,612.5 C901.7,615.8 901.3,615.0 882.0,625.0 C862.7,635.0 816.2,661.8 797.0,672.6 C777.8,683.4 779.5,682.0 767.0,690.0 C754.5,698.0 732.8,713.0 722.0,720.5 C711.2,728.0 707.4,730.6 702.0,735.0 C696.6,739.4 692.4,743.8 689.6,747.0 C686.8,750.2 686.0,751.7 685.0,754.0 C684.0,756.3 683.6,758.8 683.5,761.0 C683.4,763.2 683.1,765.5 684.5,767.4 C685.9,769.3 688.9,771.6 691.6,772.5 C694.3,773.4 699.3,772.5 700.8,772.5 L746.7,747.0 L770.0,734.6 L770.0,750.9 C780.4,745.4 812.1,728.8 832.4,718.0 C852.7,707.2 874.7,695.9 892.0,686.0 C909.3,676.1 925.0,666.9 936.0,658.5 C947.0,650.1 954.1,639.5 957.7,635.7 L986.3,618.0 L986.3,608.0 L1006.4,598.6 Z" fill="url(#gscoop)" stroke="#f29234" stroke-width="1"/>
<line x1="617" y1="769.4" x2="949.6" y2="579" stroke="#c98a58" stroke-width="1"/></g>
<polygon points="484.0,805.0 721.0,942.0 721.0,971.0 484.0,834.0" fill="#54200f" stroke="#f29234" stroke-width="1"/>
<polygon points="721.0,942.0 1128.0,708.0 1128.0,738.0 721.0,971.0" fill="#54200f" stroke="#f29234" stroke-width="1"/>
<polygon points="721.0,942.0 725.0,940.0 725.0,969.0 721.0,971.0" fill="#1a6296" stroke="#f29234" stroke-width="1"/>
<polygon points="484.0,805.0 891.0,570.0 1128.0,708.0 721.0,942.0" fill="#289be6" stroke="#f29234" stroke-width="1"/>
<ellipse cx="548" cy="795" rx="22" ry="12.5" fill="#1a6296" stroke="#c98a58" stroke-width="1.2"/><line x1="532.16" y1="786.5" x2="532.16" y2="803.5" stroke="#c98a58" stroke-width="1"/><line x1="563.84" y1="786.5" x2="563.84" y2="803.5" stroke="#c98a58" stroke-width="1"/>
<ellipse cx="578" cy="819" rx="10" ry="6" fill="#1a6296" stroke="#c98a58" stroke-width="1.2"/><line x1="570.8" y1="814.92" x2="570.8" y2="823.08" stroke="#c98a58" stroke-width="1"/><line x1="585.2" y1="814.92" x2="585.2" y2="823.08" stroke="#c98a58" stroke-width="1"/><ellipse cx="578" cy="819" rx="7.8" ry="4.4" fill="none" stroke="#f39a30" stroke-width="1.4"/>
<ellipse cx="739" cy="906" rx="22" ry="12.5" fill="#1a6296" stroke="#c98a58" stroke-width="1.2"/><line x1="723.16" y1="897.5" x2="723.16" y2="914.5" stroke="#c98a58" stroke-width="1"/><line x1="754.84" y1="897.5" x2="754.84" y2="914.5" stroke="#c98a58" stroke-width="1"/>
<ellipse cx="902" cy="812" rx="22" ry="12.5" fill="#1a6296" stroke="#c98a58" stroke-width="1.2"/><line x1="886.16" y1="803.5" x2="886.16" y2="820.5" stroke="#c98a58" stroke-width="1"/><line x1="917.84" y1="803.5" x2="917.84" y2="820.5" stroke="#c98a58" stroke-width="1"/>
<ellipse cx="1065" cy="719" rx="22" ry="12.5" fill="#1a6296" stroke="#c98a58" stroke-width="1.2"/><line x1="1049.16" y1="710.5" x2="1049.16" y2="727.5" stroke="#c98a58" stroke-width="1"/><line x1="1080.84" y1="710.5" x2="1080.84" y2="727.5" stroke="#c98a58" stroke-width="1"/>
<ellipse cx="1035" cy="694" rx="10" ry="6" fill="#1a6296" stroke="#c98a58" stroke-width="1.2"/><line x1="1027.8" y1="689.92" x2="1027.8" y2="698.08" stroke="#c98a58" stroke-width="1"/><line x1="1042.2" y1="689.92" x2="1042.2" y2="698.08" stroke="#c98a58" stroke-width="1"/><ellipse cx="1035" cy="694" rx="7.8" ry="4.4" fill="none" stroke="#f39a30" stroke-width="1.4"/>
<line x1="748" y1="860.5" x2="942" y2="749.5" stroke="#050505" stroke-width="5"/>
<path d="M746.0,761.0 C751.7,758.5 760.1,756.2 780.0,746.0 C799.9,735.8 839.8,715.0 865.6,700.0 C891.4,685.0 918.6,665.8 934.7,656.0 C950.8,646.2 957.8,643.5 962.4,641.0 L962.4,737.0 L940.0,748.0 L746.0,861.0 L746.0,761.0 Z" fill="#1a6296" stroke="#f29234" stroke-width="1"/>
<line x1="935" y1="655" x2="935" y2="749" stroke="#c98a58" stroke-width="1"/>
<path d="M962.4,630.4 L987.5,608.0 L1006.4,598.6 L1006.4,699.0 C1006.0,700.3 1005.6,704.4 1004.0,707.0 C1002.4,709.6 999.8,712.2 997.0,714.5 C994.2,716.8 988.7,719.9 987.0,721.0 L962.4,737.0 L962.4,630.4 Z" fill="#54200f" stroke="#f29234" stroke-width="1"/>
<line x1="987.5" y1="608" x2="987.5" y2="721" stroke="#f29234" stroke-width="1"/>
<path d="M607.0,756.0 C608.7,758.4 613.8,766.7 617.0,770.5 C620.2,774.3 621.0,776.2 626.5,778.6 C632.0,781.0 643.2,783.9 650.0,785.0 C656.8,786.1 661.8,785.7 667.0,785.0 C672.2,784.3 675.7,782.9 681.5,780.6 C687.3,778.4 691.2,776.9 702.0,771.5 C712.8,766.1 738.7,751.9 746.0,748.0 L746.0,861.0 C743.0,862.2 734.0,866.7 728.0,868.5 C722.0,870.3 716.2,871.5 710.0,872.0 C703.8,872.5 698.0,872.5 690.5,871.5 C683.0,870.5 671.5,867.9 665.0,866.0 C658.5,864.1 658.1,863.5 651.7,860.0 C645.3,856.5 633.0,849.3 626.7,845.0 C620.4,840.7 617.3,837.8 614.0,834.0 C610.7,830.2 608.2,824.0 607.0,822.0 L607.0,756.0 Z" fill="#54200f" stroke="#f29234" stroke-width="1"/>
<line x1="627" y1="779" x2="627" y2="843" stroke="#f29234" stroke-width="1"/>
<line x1="650" y1="785" x2="650" y2="858" stroke="#f29234" stroke-width="1"/>

<path d="M607.0,756.0 C606.9,754.2 606.2,748.5 606.5,745.0 C606.8,741.5 607.8,738.2 609.0,735.0 C610.2,731.8 611.2,729.5 614.0,726.0 C616.8,722.5 620.3,717.9 625.5,714.0 C630.7,710.1 637.8,706.6 645.0,702.5 C652.2,698.4 665.0,691.7 669.0,689.5 L860.0,580.0 C862.5,578.7 870.2,573.9 875.0,572.0 C879.8,570.1 882.3,569.3 888.6,568.8 C894.9,568.3 906.1,568.3 913.0,568.8 C919.9,569.3 923.9,570.5 930.0,572.0 C936.1,573.5 941.8,574.9 949.6,577.6 C957.4,580.3 969.1,585.7 976.7,588.4 C984.3,591.1 990.6,592.8 995.0,594.0 C999.4,595.2 1001.1,594.7 1003.0,595.5 C1004.9,596.3 1005.8,598.1 1006.4,598.6 C1003.7,599.2 997.7,601.6 990.0,602.5 C982.3,603.4 966.7,603.5 960.0,604.0 C953.3,604.5 957.4,604.1 949.6,605.5 C941.8,606.9 924.3,609.2 913.0,612.5 C901.7,615.8 901.3,615.0 882.0,625.0 C862.7,635.0 816.2,661.8 797.0,672.6 C777.8,683.4 779.5,682.0 767.0,690.0 C754.5,698.0 732.8,713.0 722.0,720.5 C711.2,728.0 707.4,730.6 702.0,735.0 C696.6,739.4 692.4,743.8 689.6,747.0 C686.8,750.2 686.0,751.7 685.0,754.0 C684.0,756.3 683.6,758.8 683.5,761.0 C683.4,763.2 683.1,765.5 684.5,767.4 C685.9,769.3 688.9,771.6 691.6,772.5 C694.3,773.4 699.3,772.5 700.8,772.5 C697.6,773.9 687.1,778.5 681.5,780.6 C675.9,782.7 672.2,784.3 667.0,785.0 C661.8,785.7 656.8,786.1 650.0,785.0 C643.2,783.9 632.0,781.0 626.5,778.6 C621.0,776.2 620.2,774.3 617.0,770.5 C613.8,766.7 608.7,758.4 607.0,756.0 Z" fill="url(#gblue)" stroke="#c98a58" stroke-width="1"/>
<path d="M1006.4,598.6 C1003.7,599.2 997.7,601.6 990.0,602.5 C982.3,603.4 966.7,603.5 960.0,604.0 C953.3,604.5 957.4,604.1 949.6,605.5 C941.8,606.9 924.3,609.2 913.0,612.5 C901.7,615.8 901.3,615.0 882.0,625.0 C862.7,635.0 816.2,661.8 797.0,672.6 C777.8,683.4 779.5,682.0 767.0,690.0 C754.5,698.0 732.8,713.0 722.0,720.5 C711.2,728.0 707.4,730.6 702.0,735.0 C696.6,739.4 692.4,743.8 689.6,747.0 C686.8,750.2 686.0,751.7 685.0,754.0 C684.0,756.3 683.6,758.8 683.5,761.0 C683.4,763.2 683.1,765.5 684.5,767.4 C685.9,769.3 688.9,771.6 691.6,772.5 C694.3,773.4 699.3,772.5 700.8,772.5 L746.0,748.0 L746.0,761.0 C751.7,758.5 760.1,756.2 780.0,746.0 C799.9,735.8 839.8,715.0 865.6,700.0 C891.4,685.0 918.6,665.8 934.7,656.0 C950.8,646.2 957.8,643.5 962.4,641.0 L962.4,630.4 L987.5,608.0 L1006.4,598.6 Z" fill="url(#gscoop)" stroke="#f29234" stroke-width="1"/>
<line x1="617" y1="769.4" x2="949.6" y2="579" stroke="#c98a58" stroke-width="1"/>
<g stroke="#e6e630" fill="none" stroke-width="1">
<ellipse cx="806.5" cy="448.5" rx="20" ry="11"/>
<ellipse cx="806.5" cy="599.5" rx="20" ry="11"/>
<path d="M786.5,599.5 Q787.5,615 806.5,617 Q825.5,615 826.5,599.5"/>
<line x1="786.5" y1="448.5" x2="786.5" y2="599.5"/><line x1="789.5" y1="456.5" x2="789.5" y2="606"/><line x1="796.5" y1="459.5" x2="796.5" y2="607"/>
<line x1="801.5" y1="437.5" x2="801.5" y2="588.5"/><line x1="812.5" y1="459.5" x2="812.5" y2="607"/><line x1="816.5" y1="437.5" x2="816.5" y2="588.5"/><line x1="826.5" y1="448.5" x2="826.5" y2="599.5"/>
<path d="M796.5,607 L804.5,617 M812.5,607 L807.5,617 M789.5,606 Q796,614 806.5,614.5"/>
</g>
<g stroke="#50e0d0" fill="none" stroke-width="1" opacity="0.85"><path d="M795,612 Q806,621 821,608 M800,615 Q812,618 818,611"/></g>

<g stroke="#e42222" fill="none" stroke-width="1.2">
<line x1="482.6" y1="804.4" x2="482.6" y2="688"/>
<polygon points="482.6,688 471.5,716 482.6,721 493,716"/>
<line x1="471.5" y1="716" x2="493" y2="716"/><line x1="482.6" y1="688" x2="482.6" y2="721"/>
<line x1="482.6" y1="804.4" x2="411" y2="764"/>
<polygon points="380,747 400,748 411,753 411,764 400,770"/>
<line x1="380" y1="747" x2="411" y2="764"/><line x1="400" y1="748" x2="400" y2="770"/>
<polyline points="554,762 554,751 575,746 583,746"/><line x1="554" y1="751" x2="566" y2="760"/><line x1="566" y1="758" x2="566" y2="764"/>
</g>
<g fill="#e42222" font-size="13" font-family="Liberation Sans">
<text x="490" y="688">Z</text><text x="387" y="747">Y</text><text x="594" y="748">X</text>
</g>
<g stroke="#c82020" fill="none" stroke-width="1.3">
<line x1="302" y1="937" x2="276" y2="923"/><polygon points="266,919 279,920 281,927 276,930"/>
<line x1="302" y1="937" x2="326" y2="923"/><polygon points="336,919 323,920 321,927 326,930"/>
</g>
<g fill="#c82020" font-size="12" font-family="Liberation Sans"><text x="271" y="914">Y</text><text x="341" y="913">X</text></g>
<g stroke="#22e0ee" fill="none" stroke-width="1.5">
<line x1="302" y1="937" x2="303" y2="898"/><polygon points="303,897 298,909 303,912 308,909"/>
</g>
<text x="308" y="891" fill="#22e0ee" font-size="12" font-family="Liberation Sans">Z</text>
<g stroke="#ffffff" fill="none" stroke-width="1.3">
<polyline points="1465,104 1461,113 1490,113 1490,107 1496,104"/><polyline points="1463,112 1478,104"/><polyline points="1470,112 1472,108 1478,104"/>
<line x1="1528" y1="104" x2="1528" y2="130"/><line x1="1538" y1="104" x2="1538" y2="157"/>
<polyline points="1528,130 1524,135 1538,157"/><polyline points="1524,117 1528,120"/>
</g>
<text x="1546" y="157" fill="#fff" font-size="12" font-family="Liberation Sans">Y</text>

</svg></div>
<div class="a" style="left:1890px;top:103px;width:30px;height:883px;background:#f0f0f0"></div>
<div class="a" style="left:1891px;top:103px;width:1px;height:883px;background:#fafafa"></div>
<div class="a" style="left:1892px;top:103px;width:28px;height:1px;background:#fff"></div>
<svg class="a" style="left:1896px;top:107px" width="21" height="22" viewBox="0 0 21 22"><path d="M2.5,6.5 L6.5,2.5 H16.5 V12.5 L12.5,16.5 H2.5Z" fill="#fafafa"/><path d="M2.5,6.5 L6.5,2.5 H16.5 L12.5,6.5Z" fill="#74c8ec"/><path d="M2.5,6.5 L6.5,2.5 H16.5 V12.5 L12.5,16.5 H2.5Z" fill="none" stroke="#4a4a4a" stroke-width="0.9"/><path d="M2.5,6.5 H12.5 V16.5 M12.5,6.5 L16.5,2.5" stroke="#4a4a4a" fill="none" stroke-width="0.9"/><path d="M6.5,2.5 V12.5 H16.5 M6.5,12.5 L2.5,16.5" stroke="#b0b0b0" fill="none" stroke-width="0.6"/><path d="M14,20 H20 V14Z" fill="#111"/></svg>
<svg class="a" style="left:1896px;top:131px" width="21" height="22" viewBox="0 0 21 22"><path d="M2.5,6.5 L6.5,2.5 H16.5 V12.5 L12.5,16.5 H2.5Z" fill="#fafafa"/><path d="M12.5,6.5 L16.5,2.5 V12.5 L12.5,16.5Z" fill="#74c8ec"/><path d="M2.5,6.5 L6.5,2.5 H16.5 V12.5 L12.5,16.5 H2.5Z" fill="none" stroke="#4a4a4a" stroke-width="0.9"/><path d="M2.5,6.5 H12.5 V16.5 M12.5,6.5 L16.5,2.5" stroke="#4a4a4a" fill="none" stroke-width="0.9"/><path d="M6.5,2.5 V12.5 H16.5 M6.5,12.5 L2.5,16.5" stroke="#b0b0b0" fill="none" stroke-width="0.6"/><path d="M14,20 H20 V14Z" fill="#111"/></svg>
<svg class="a" style="left:1896px;top:155px" width="21" height="22" viewBox="0 0 21 22"><path d="M2.5,6.5 L6.5,2.5 H16.5 V12.5 L12.5,16.5 H2.5Z" fill="#fafafa"/><rect x="2.5" y="6.5" width="10" height="10" fill="#74c8ec"/><path d="M2.5,6.5 L6.5,2.5 H16.5 V12.5 L12.5,16.5 H2.5Z" fill="none" stroke="#4a4a4a" stroke-width="0.9"/><path d="M2.5,6.5 H12.5 V16.5 M12.5,6.5 L16.5,2.5" stroke="#4a4a4a" fill="none" stroke-width="0.9"/><path d="M6.5,2.5 V12.5 H16.5 M6.5,12.5 L2.5,16.5" stroke="#b0b0b0" fill="none" stroke-width="0.6"/><path d="M14,20 H20 V14Z" fill="#111"/></svg>
<svg class="a" style="left:1896px;top:179px" width="21" height="22" viewBox="0 0 21 22"><path d="M2,5 L9,1 L17,5 V14 L9,18 L2,14Z" fill="#8ed4f0" stroke="#1b6a90" stroke-width="1"/><path d="M2,5 L9,9 L17,5 M9,9 V18" stroke="#1b6a90" fill="none"/><path d="M5,6 L9,8 L13,6 L9,10Z" fill="#e01818"/><path d="M14,20 H20 V14Z" fill="#111"/></svg>
<svg class="a" style="left:1896px;top:205px" width="20" height="20" viewBox="0 0 20 20"><circle cx="8" cy="8" r="7" fill="#f4f4f4" stroke="#2a8ab0" stroke-width="1.6"/><path d="M5,9 Q5,4 9,4 Q12,5 11,8 L8,8 L9,6" stroke="#c8a020" stroke-width="2" fill="none"/><path d="M13,13 L19,19" stroke="#e89040" stroke-width="2.6"/></svg>
<svg class="a" style="left:1897px;top:228px" width="19" height="21" viewBox="0 0 19 21"><path d="M1,1 H12 L17,6 V20 H1Z" fill="#e8f4fc" stroke="#5a8ab0"/><path d="M4,9 Q6,5 10,6 L12,4 L13,9 L8,9 L10,8 Q7,7 6,10Z M14,12 Q12,16 8,15 L6,17 L5,12 L10,12 L8,13 Q11,14 12,11Z" fill="#20b030"/></svg>
<svg class="a" style="left:1896px;top:253px" width="21" height="21" viewBox="0 0 21 21"><circle cx="8" cy="8" r="7.3" fill="#f4f4f4" stroke="#2a8ab0" stroke-width="1.6"/><path d="M4,4 L12,12 M12,4 L4,12" stroke="#111" stroke-width="2"/><path d="M3,3 H6 M3,3 V6 M13,3 H10 M13,3 V6 M3,13 H6 M3,13 V10 M13,13 H10 M13,13 V10" stroke="#111" stroke-width="1.5"/><path d="M13,13 L19,19" stroke="#e8c030" stroke-width="3"/><path d="M14,20 H20 V14Z" fill="#111"/></svg>
<svg class="a" style="left:1896px;top:277px" width="21" height="20" viewBox="0 0 21 20"><circle cx="8" cy="8" r="7.3" fill="#f4f4f4" stroke="#2a8ab0" stroke-width="1.6"/><rect x="4" y="4" width="8" height="8" fill="none" stroke="#111" stroke-width="2"/><path d="M13,13 L19,19" stroke="#e8c030" stroke-width="3"/></svg>
<div class="a" style="left:1894px;top:301px;width:23px;height:1px;background:#c0c0c0"></div>
<svg class="a" style="left:1896px;top:308px" width="20" height="19" viewBox="0 0 20 19"><path d="M1,7 L9,2 L19,5 V12 L11,17 L1,14Z" fill="#5cc0e4" stroke="#13506e" stroke-width="1"/><path d="M1,7 L11,10 L19,5 M11,10 V17" stroke="#13506e" fill="none"/><path d="M3,7 L9,4 L16,6 L11,8Z" fill="#b8e8f8"/></svg>
<div class="a" style="left:1894px;top:334px;width:23px;height:1px;background:#c0c0c0"></div>
<div class="a" style="left:1894px;top:341px;width:24px;height:22px;border:1px solid #707070;border-radius:3px;background:linear-gradient(#e2e2e2,#d0d0d0)"></div>
<svg class="a" style="left:1897px;top:343px" width="20" height="19" viewBox="0 0 20 19"><defs><radialGradient id="sph" cx="0.4" cy="0.35" r="0.7"><stop offset="0" stop-color="#fff0a0"/><stop offset="0.5" stop-color="#e0b020"/><stop offset="1" stop-color="#9a7010"/></radialGradient></defs><circle cx="9" cy="9" r="8" fill="url(#sph)"/><path d="M14,18 H19 V13Z" fill="#111"/></svg>
<div class="a" style="left:1894px;top:365px;width:24px;height:22px;border:1px solid #707070;border-radius:3px;background:linear-gradient(#e2e2e2,#d0d0d0)"></div>
<svg class="a" style="left:1897px;top:367px" width="18" height="18" viewBox="0 0 18 18"><circle cx="9" cy="9" r="7.5" fill="none" stroke="#555" stroke-width="1.2"/><ellipse cx="9" cy="9" rx="3.5" ry="7.5" fill="none" stroke="#555" stroke-width="1"/><path d="M1.5,9 H16.5 M3,5 H15 M3,13 H15" stroke="#555" stroke-width="1"/></svg>
<div class="a" style="left:1894px;top:398px;width:23px;height:1px;background:#c0c0c0"></div>
<svg class="a" style="left:1896px;top:406px" width="21" height="22" viewBox="0 0 21 22"><rect x="2" y="6" width="15" height="12" fill="none" stroke="#d8b040" stroke-width="1.5"/><path d="M7,2 V15 L10,12 L13,18 L15,17 L12,11 H16Z" fill="#fff" stroke="#111" stroke-width="1"/><path d="M15,21 H21 V15Z" fill="#111"/></svg>
<svg class="a" style="left:1896px;top:435px" width="21" height="21" viewBox="0 0 21 21"><path d="M2,5 V18 L5,15 L8,20 L10,19 L7,14 H11Z" fill="#fff" stroke="#111" stroke-width="1"/><path d="M9,7 Q12,1 17,3 Q20,6 17,10 L14,10 L16,7" stroke="#d0a020" stroke-width="2.6" fill="none"/></svg>
<div class="a" style="left:1894px;top:467px;width:15px;height:14px;background:#e3ebf5;border-top:1px solid #a7b7c9;border-right:1px solid #a7b7c9"></div>
<svg class="a" style="left:1897px;top:471px" width="9" height="9" viewBox="0 0 9 9"><path d="M1,1L8,8M8,1L1,8" stroke="#637386" stroke-width="2.2"/></svg>
<div class="a" style="left:1892px;top:482px;width:28px;height:1px;background:#c8c8c8"></div>
<div class="a" style="left:0;top:987px;width:1920px;height:61px;background:#f0f0f0"></div>
<div class="a" style="left:0;top:986px;width:1920px;height:1px;background:#a0a0a0"></div>
<div class="a" style="left:0;top:1016px;width:477px;height:1px;background:#a8a8a8"></div>
<div class="a" style="left:0;top:1017px;width:477px;height:1px;background:#fcfcfc"></div>
<div class="a" style="left:0;top:1047px;width:1920px;height:1px;background:#b0b0b0"></div>
<div class="a" style="left:0;top:1048px;width:1920px;height:1px;background:#f8f8f8"></div>
<div class="a" style="left:3px;top:989px;width:45px;height:25px;background:#fbfbfb;border-radius:2px"></div>
<svg class="a" style="left:6px;top:990px" width="20" height="22" viewBox="0 0 20 22"><path d="M5,4 H15 V14 Q15,20 10,20 Q5,20 5,14Z" fill="url(#tg)" stroke="#222" stroke-width="1.2"/><defs><linearGradient id="tg" x1="0" y1="0" x2="0" y2="1"><stop offset="0" stop-color="#fff4c0"/><stop offset="0.6" stop-color="#e8d080"/><stop offset="0.62" stop-color="#d8b040"/><stop offset="1" stop-color="#c89830"/></linearGradient></defs><path d="M2,1 L8,7 M2,7 L8,1 M5,0 V8 M1,4 H9" stroke="#e01818" stroke-width="1"/></svg>
<svg class="a" style="left:37px;top:1001px" width="8" height="5" viewBox="0 0 8 5"><path d="M0,0H8L4,5Z" fill="#000"/></svg>
<svg class="a" style="left:57px;top:992px" width="20" height="20" viewBox="0 0 20 20"><rect x="1" y="1" width="6" height="18" fill="#e8d890" stroke="#111"/><rect x="7" y="1" width="6" height="18" fill="#70a870" stroke="#111"/><rect x="13" y="1" width="6" height="18" fill="#b8b8f0" stroke="#111"/><path d="M4,4 L14,14" stroke="#333" stroke-width="4"/><path d="M8,8 L14,14" stroke="#e8dca0" stroke-width="3.5"/></svg>
<div class="a" style="left:88px;top:991px;width:121px;height:21px;background:linear-gradient(#f3f3f3 0,#ebebeb 40%,#dcdcdc 45%,#d3d3d3 100%);border-radius:2px;border:1px solid #e4e4e4"></div>
<svg class="a" style="left:193px;top:998px" width="11" height="6"><path d="M0,0H11L5.5,6Z" fill="#000"/></svg>
<div class="a" style="left:91px;top:991px;line-height:21px;white-space:nowrap">3</div>
<svg class="a" style="left:215px;top:992px" width="20" height="20" viewBox="0 0 20 20"><g fill="#cdcdcd" stroke="#bbb" stroke-width="0.6"><path d="M2,14 L10,10 L18,14 L10,18Z"/><path d="M2,14 V16 L10,20 V18Z M18,14 V16 L10,20 V18Z"/><path d="M4,10 L10,7 L16,10 L10,13Z"/><path d="M4,10 V12 L10,15 L16,12 V10 L10,13Z"/><path d="M6,5 L10,3 L14,5 L10,7Z"/><path d="M6,5 V7 L10,9 L14,7 V5 L10,7Z"/></g></svg>
<div class="a" style="left:248px;top:990px;width:1px;height:23px;background:#a8a8a8;box-shadow:1px 0 0 #fff"></div>
<div class="a" style="left:308px;top:988px;width:168px;height:29px;border-right:1px solid #c4c4c4;border-bottom:1px solid #c4c4c4;border-left:1px solid #c4c4c4"></div>
<svg class="a" style="left:317px;top:991px" width="21" height="21" viewBox="0 0 21 21"><path d="M4,19 V3 M4,18 H19" stroke="#2a7a9a" stroke-width="2" fill="none"/><path d="M1,5 L4,1 L7,5 M16,15 L20,18 L16,21" stroke="#2a7a9a" stroke-width="1.6" fill="none"/><circle cx="4" cy="18" r="3" fill="#2a6a8a"/><path d="M5,17 L10,12" stroke="#e02020" stroke-width="2"/><path d="M9,12 L16,3 L20,6 L12,15Z" fill="#f8e8b0" stroke="#222"/></svg>
<svg class="a" style="left:341px;top:991px" width="22" height="21" viewBox="0 0 22 21"><circle cx="8" cy="12" r="7" fill="#e81818"/><path d="M8,5 A7,7 0 0 0 8,19Z" fill="#18c818"/><path d="M7,1 V21" stroke="#1818d0" stroke-width="1.5"/><path d="M11,9 L17,2 L21,5 L14,12Z" fill="#f8e8b0" stroke="#222"/></svg>
<svg class="a" style="left:366px;top:991px" width="22" height="21" viewBox="0 0 22 21"><circle cx="8" cy="12" r="7" fill="#e81818"/><path d="M8,5 A7,7 0 0 0 8,19Z" fill="#18c818"/><path d="M1,6 L14,20" stroke="#1818d0" stroke-width="1.2"/><path d="M11,9 L17,2 L21,5 L14,12Z" fill="#f8e8b0" stroke="#222"/></svg>
<div class="a" style="left:393px;top:990px;width:1px;height:23px;background:#a8a8a8;box-shadow:1px 0 0 #fff"></div>
<svg class="a" style="left:403px;top:991px" width="20" height="20" viewBox="0 0 20 20"><path d="M1,19 L4,12 L14,2 Q17,1 19,4 Q19,7 17,8 L8,17Z" fill="#8ad4f4" stroke="#2a7aa8" stroke-width="0.8"/><path d="M1,19 L4,12 L8,16Z" fill="#fff" stroke="#111"/><path d="M1,19 L3,15 L5,17Z" fill="#111"/></svg>
<svg class="a" style="left:427px;top:991px" width="20" height="20" viewBox="0 0 20 20"><path d="M3,3 Q9,6 10,10 Q12,6 17,2 M3,18 Q8,14 10,10 Q12,14 17,18" stroke="#2a7a98" stroke-width="4.4" fill="none" stroke-linecap="round"/><path d="M3,3 Q9,6 10,10 Q12,6 17,2 M3,18 Q8,14 10,10 Q12,14 17,18" stroke="#9ad8e8" stroke-width="2.4" fill="none" stroke-linecap="round"/></svg>
<div class="a" style="left:457px;top:995px;width:15px;height:14px;background:#e3ebf5;border-top:1px solid #a7b7c9;border-right:1px solid #a7b7c9"></div>
<svg class="a" style="left:460px;top:999px" width="9" height="9" viewBox="0 0 9 9"><path d="M1,1L8,8M8,1L1,8" stroke="#637386" stroke-width="2.2"/></svg>
<svg class="a" style="left:3px;top:1021px" width="23" height="23" viewBox="0 0 23 23"><path d="M6,19 L11,13 M6,19 H18" stroke="#4a90b0" stroke-width="1.8" fill="none"/><path d="M9,11 L12,12 L11,15 M16,17 L19,19 L16,21" stroke="#4a90b0" stroke-width="1.5" fill="none"/><circle cx="6" cy="19" r="3" fill="none" stroke="#2a5a7a" stroke-width="1.6"/><path d="M2,1 L10,9 M2,9 L10,1 M6,0 V10 M1,5 H11" stroke="#e01818" stroke-width="1"/><path d="M17,23 H23 V17Z" fill="#111"/></svg>
<div class="a" style="left:30px;top:1022px;width:88px;height:21px;background:linear-gradient(#f3f3f3 0,#ebebeb 40%,#dcdcdc 45%,#d3d3d3 100%);border-radius:2px;border:1px solid #e4e4e4"></div>
<svg class="a" style="left:102px;top:1029px" width="11" height="6"><path d="M0,0H11L5.5,6Z" fill="#000"/></svg>
<div class="a" style="left:33px;top:1022px;line-height:21px;white-space:nowrap">2_1_1</div>
<svg class="a" style="left:124px;top:1022px" width="21" height="22" viewBox="0 0 21 22"><path d="M7,9 L13,6 L20,9 V16 L14,20 L7,16Z" fill="#8ad6f0" stroke="#333" stroke-width="0.9"/><path d="M7,9 L14,12 L20,9 M14,12 V20" stroke="#333" fill="none" stroke-width="0.9"/><path d="M7,9 L14,12 V20 L7,16Z" fill="#f0d060" stroke="#333" stroke-width="0.9"/><text x="0" y="10" font-size="11" font-weight="bold" fill="#8ad6f0" stroke="#2a6a90" stroke-width="0.6" font-family="Liberation Sans">X</text></svg>
<svg class="a" style="left:151px;top:1022px" width="21" height="22" viewBox="0 0 21 22"><path d="M7,9 L13,6 L20,9 V16 L14,20 L7,16Z" fill="#8ad6f0" stroke="#333" stroke-width="0.9"/><path d="M7,9 L14,12 L20,9 M14,12 V20" stroke="#333" fill="none" stroke-width="0.9"/><path d="M14,12 L20,9 V16 L14,20Z" fill="#f0d060" stroke="#333" stroke-width="0.9"/><text x="0" y="10" font-size="11" font-weight="bold" fill="#8ad6f0" stroke="#2a6a90" stroke-width="0.6" font-family="Liberation Sans">Y</text></svg>
<div class="a" style="left:176px;top:1022px;width:24px;height:22px;border:1px solid #6a6a6a;border-radius:3px;background:linear-gradient(#e4e4e4,#d2d2d2)"></div>
<svg class="a" style="left:178px;top:1022px" width="21" height="22" viewBox="0 0 21 22"><path d="M7,9 L13,6 L20,9 V16 L14,20 L7,16Z" fill="#8ad6f0" stroke="#333" stroke-width="0.9"/><path d="M7,9 L14,12 L20,9 M14,12 V20" stroke="#333" fill="none" stroke-width="0.9"/><path d="M7,9 L13,6 L20,9 L14,12Z" fill="#f0d060" stroke="#333" stroke-width="0.9"/><text x="0" y="10" font-size="11" font-weight="bold" fill="#8ad6f0" stroke="#2a6a90" stroke-width="0.6" font-family="Liberation Sans">Z</text></svg>
<svg class="a" style="left:215px;top:1023px" width="20" height="20" viewBox="0 0 20 20"><path d="M1,3.5H19M1,7.5H19M1,11.5H19M1,15.5H19M3.5,1V19M7.5,1V19M11.5,1V19M15.5,1V19" stroke="#b4b4b4" stroke-width="1"/></svg>
<div class="a" style="left:240px;top:1022px;width:53px;height:22px;background:#f0f0f0;border:1px solid #c8c8c8;border-radius:2px"></div>
<div class="a" style="left:306px;top:1022px;width:56px;height:22px;background:#ececec;border:1px solid #d6d6d6;border-radius:2px"></div>
<div class="a" style="left:312px;top:1022px;line-height:22px;white-space:nowrap">-4,4491</div>
<div class="a" style="left:366px;top:1022px;width:57px;height:22px;background:#ececec;border:1px solid #d6d6d6;border-radius:2px"></div>
<div class="a" style="left:372px;top:1022px;line-height:22px;white-space:nowrap">-124,72</div>
<div class="a" style="left:427px;top:1022px;width:56px;height:22px;background:#ececec;border:1px solid #d6d6d6;border-radius:2px"></div>
<div class="a" style="left:433px;top:1022px;line-height:22px;white-space:nowrap">0</div>
<svg class="a" style="left:488px;top:1023px" width="20" height="20" viewBox="0 0 20 20"><rect x="0.5" y="0.5" width="19" height="19" fill="#efefef" stroke="#a8a8a8"/><text x="2" y="7" font-size="7" font-weight="bold" fill="#a8a8a8" font-family="Liberation Sans">x</text><text x="2" y="13" font-size="7" font-weight="bold" fill="#a8a8a8" font-family="Liberation Sans">y</text><text x="2" y="19" font-size="7" font-weight="bold" fill="#a8a8a8" font-family="Liberation Sans">z</text><path d="M8,3.5H18M8,9.5H18M8,15.5H18" stroke="#b8b8b8" stroke-width="2.5"/></svg>
<svg class="a" style="left:515px;top:1023px" width="20" height="20" viewBox="0 0 20 20"><path d="M5,11 V19 M1,15 H9" stroke="#b0b0b0" stroke-width="1.3"/><circle cx="5" cy="15" r="2.5" fill="none" stroke="#b0b0b0"/><path d="M8,12 L13,7" stroke="#b8b8b8" stroke-width="1.3"/><circle cx="16" cy="4" r="2.6" fill="#d8d8d8" stroke="#aaa"/></svg>
<div class="a" style="left:540px;top:1022px;width:90px;height:22px;background:#f0f0f0;border:1px solid #c4c4c4;border-radius:2px"></div>
<svg class="a" style="left:645px;top:1025px" width="21" height="17" viewBox="0 0 21 17"><rect x="1" y="2" width="8" height="14" rx="1" fill="#30a040" stroke="#2a5a80"/><path d="M3,5H7M3,8H7M3,11H7" stroke="#b0f0b0"/><rect x="12" y="5" width="3" height="10" fill="#2a7ab8"/><rect x="17" y="5" width="3" height="10" fill="#2a7ab8"/></svg>
<svg class="a" style="left:680px;top:1022px" width="22" height="22" viewBox="0 0 22 22"><path d="M1,2V10M21,2V10M11,2V10M1,9H21M3.5,5V9M6,5V9M8.5,5V9M13.5,5V9M16,5V9M18.5,5V9" stroke="#3a9ab0" stroke-width="1"/><text x="0" y="21" font-size="9" fill="#3a9ab0" font-family="Liberation Sans" letter-spacing="2.3">012</text></svg>
<div class="a" style="left:706px;top:1022px;width:56px;height:22px;background:#ececec;border:1px solid #d6d6d6;border-radius:2px"></div>
<div class="a" style="left:712px;top:1022px;line-height:22px;white-space:nowrap">mm</div>
<svg class="a" style="left:767px;top:1022px" width="22" height="22" viewBox="0 0 22 22"><circle cx="11" cy="11" r="7.5" fill="none" stroke="#3a8aa0" stroke-width="1.4"/><path d="M11,1V21M1,11H21" stroke="#3a8aa0" stroke-width="1.4"/></svg>
<div class="a" style="left:792px;top:1022px;width:56px;height:22px;background:#ececec;border:1px solid #d6d6d6;border-radius:2px"></div>
<svg class="a" style="left:854px;top:1022px" width="19" height="22" viewBox="0 0 19 22"><path d="M1,12H2M3,12H4M5,12H6M7,12H8" stroke="#3a8aa0" stroke-width="2"/><path d="M10,2H17V11L15,14H12L10,11Z" fill="none" stroke="#3a8aa0" stroke-width="1.4"/><path d="M11,16H16M11,18H16M11,20H16" stroke="#3a8aa0"/></svg>
<div class="a" style="left:878px;top:1022px;width:56px;height:22px;background:#ececec;border:1px solid #d6d6d6;border-radius:2px"></div>
<svg class="a" style="left:943px;top:1023px" width="18" height="19" viewBox="0 0 18 19"><circle cx="9" cy="10" r="6.5" fill="none" stroke="#3a8aa0" stroke-width="1.4"/><path d="M1,18L17,2" stroke="#3a8aa0" stroke-width="1.4"/></svg>
<div class="a" style="left:964px;top:1022px;width:56px;height:22px;background:#ececec;border:1px solid #d6d6d6;border-radius:2px"></div>
<div class="a" style="left:970px;top:1022px;line-height:22px;white-space:nowrap">12,0</div>
<svg class="a" style="left:1026px;top:1023px" width="19" height="19" viewBox="0 0 19 19"><path d="M17,2 L5,14" stroke="#3a8aa0" stroke-width="1.6"/><path d="M4,9 V15 H10" stroke="#3a8aa0" stroke-width="1.6" fill="none"/><path d="M2,6 Q1,16 9,18" stroke="#3a8aa0" stroke-width="1.2" fill="none"/></svg>
<div class="a" style="left:1051px;top:1022px;width:56px;height:22px;background:#ececec;border:1px solid #d6d6d6;border-radius:2px"></div>
<div class="a" style="left:1057px;top:1022px;line-height:22px;white-space:nowrap">6,0</div>
<div class="a" style="left:1823px;top:1022px;width:70px;height:22px;background:linear-gradient(90deg,#1e70b4,#3a90d0 60%,#58b0e8)"></div>
<div class="a" style="left:1826px;top:1022px;line-height:22px;color:#fff;font-size:16.5px;letter-spacing:-0.2px">Delcam</div>
<svg class="a" style="left:1888px;top:1021px" width="26" height="25" viewBox="0 0 26 25"><circle cx="13" cy="12.5" r="11.5" fill="url(#dl)" stroke="#a8d0f0" stroke-width="1.5"/><defs><radialGradient id="dl" cx="0.4" cy="0.4" r="0.7"><stop offset="0" stop-color="#8ad0f8"/><stop offset="1" stop-color="#1a6ab0"/></radialGradient></defs><path d="M13,8V21M5,11Q9,6 13,8Q17,6 21,11M7,14Q10,9 13,9Q16,9 19,14" stroke="#111" stroke-width="1.2" fill="none"/></svg>



</body></html>
